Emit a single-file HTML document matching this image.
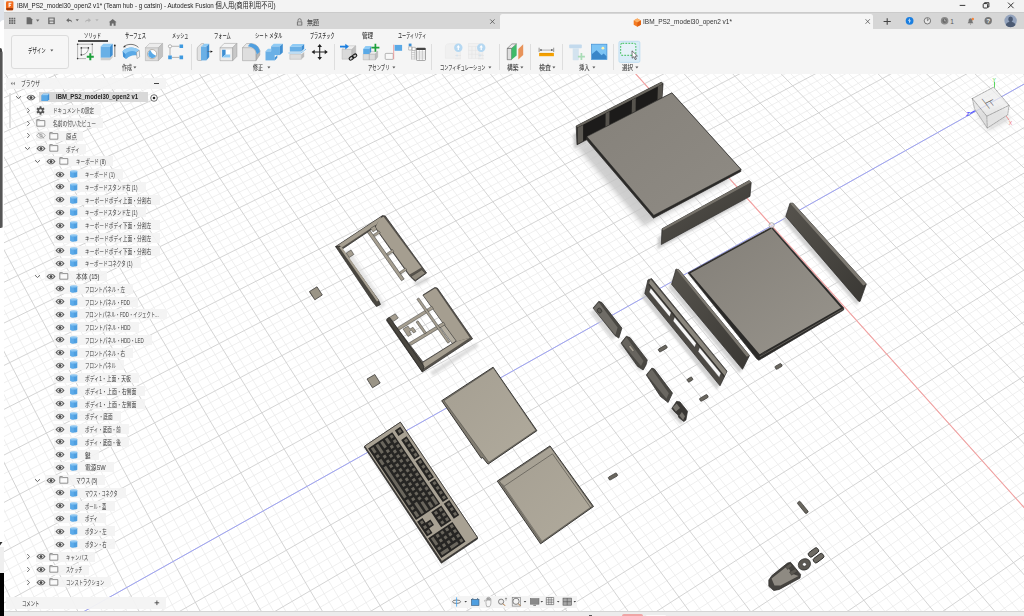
<!DOCTYPE html>
<html lang="ja"><head><meta charset="utf-8"><title>Autodesk Fusion</title>
<style>
*{box-sizing:border-box;margin:0;padding:0}
html,body{width:1024px;height:616px;overflow:hidden;background:#fff}
body{font-family:"Liberation Sans","Noto Sans CJK JP",sans-serif;color:#333;position:relative}
.abs{position:absolute}
.t{position:absolute;white-space:nowrap;line-height:1}

.tb{font-size:7px;color:#3c3c3c}
.tr{font-size:6.8px;color:#333}
.lb{position:absolute;background:rgba(240,240,240,.82);height:11px}

</style></head><body>
<svg class="abs" style="left:0;top:0" width="1024" height="616" viewBox="0 0 1024 616">
<rect x="0" y="74" width="1024" height="542" fill="#fff"/>
<path d="M-678.6 -112.6L606.8 -558.6M-677.4 -108.2L610.1 -556.1M-676.1 -103.8L613.3 -553.5M-674.9 -99.4L616.5 -551.0M-672.4 -90.5L623.1 -545.8M-671.1 -86.1L626.3 -543.3M-669.8 -81.6L629.6 -540.7M-668.5 -77.1L632.9 -538.1M-665.9 -68.0L639.6 -532.8M-664.6 -63.4L642.9 -530.2M-663.3 -58.8L646.3 -527.6M-662.0 -54.2L649.6 -524.9M-659.4 -44.8L656.4 -519.6M-658.0 -40.1L659.8 -516.9M-656.7 -35.4L663.2 -514.3M-655.4 -30.7L666.6 -511.6M-652.6 -21.2L673.5 -506.1M-651.3 -16.3L677.0 -503.4M-649.9 -11.5L680.5 -500.7M-648.5 -6.7L683.9 -497.9M-645.7 3.1L691.0 -492.4M-644.3 8.0L694.5 -489.6M-642.9 13.0L698.0 -486.9M-641.5 18.0L701.6 -484.1M-638.7 28.0L708.7 -478.4M-637.2 33.0L712.3 -475.6M-635.8 38.1L715.9 -472.8M-634.3 43.2L719.5 -469.9M-631.4 53.5L726.8 -464.2M-629.9 58.7L730.5 -461.3M-628.5 63.9L734.2 -458.4M-627.0 69.1L737.8 -455.5M-624.0 79.7L745.3 -449.7M-622.5 85.0L749.0 -446.8M-621.0 90.3L752.7 -443.8M-619.4 95.7L756.5 -440.8M-616.4 106.5L764.1 -434.9M-614.8 112.0L767.9 -431.9M-613.2 117.4L771.7 -428.9M-611.7 122.9L775.5 -425.9M-608.5 134.0L783.2 -419.8M-606.9 139.6L787.1 -416.8M-605.3 145.3L791.0 -413.7M-603.7 150.9L794.9 -410.6M-600.5 162.3L802.8 -404.4M-598.9 168.1L806.7 -401.3M-597.2 173.8L810.7 -398.2M-595.6 179.6L814.7 -395.1M-592.2 191.4L822.7 -388.8M-590.6 197.3L826.7 -385.6M-588.9 203.2L830.8 -382.4M-587.2 209.2L834.8 -379.2M-583.8 221.2L843.0 -372.8M-582.0 227.3L847.1 -369.5M-580.3 233.4L851.3 -366.3M-578.6 239.5L855.4 -363.0M-575.0 251.9L863.8 -356.5M-573.3 258.1L868.0 -353.2M-571.5 264.4L872.2 -349.9M-569.7 270.7L876.4 -346.5M-566.1 283.4L884.9 -339.8M-564.3 289.8L889.2 -336.5M-562.4 296.2L893.5 -333.1M-560.6 302.7L897.8 -329.7M-556.9 315.8L906.5 -322.8M-555.0 322.4L910.9 -319.4M-553.1 329.0L915.3 -315.9M-551.2 335.7L919.7 -312.5M-547.4 349.2L928.5 -305.5M-545.4 356.0L933.0 -302.0M-543.5 362.8L937.5 -298.5M-541.6 369.6L942.0 -294.9M-537.6 383.5L951.1 -287.8M-535.6 390.5L955.6 -284.2M-533.6 397.5L960.2 -280.6M-531.6 404.6L964.8 -277.0M-527.6 418.9L974.0 -269.7M-525.5 426.1L978.7 -266.0M-523.5 433.3L983.4 -262.4M-521.4 440.6L988.1 -258.7M-517.2 455.3L997.5 -251.2M-515.1 462.7L1002.3 -247.5M-513.0 470.2L1007.0 -243.7M-510.8 477.7L1011.8 -240.0M-506.5 492.9L1021.5 -232.4M-504.4 500.5L1026.4 -228.5M-502.2 508.2L1031.2 -224.7M-500.0 516.0L1036.1 -220.8M-495.5 531.6L1046.0 -213.1M-493.3 539.5L1051.0 -209.2M-491.0 547.4L1056.0 -205.2M-488.7 555.4L1061.0 -201.3M-484.2 571.5L1071.1 -193.4M-481.8 579.7L1076.2 -189.4M-479.5 587.9L1081.3 -185.4M-477.2 596.1L1086.4 -181.3M-472.4 612.8L1096.7 -173.2M-470.0 621.2L1101.9 -169.1M-467.6 629.6L1107.1 -165.0M-465.2 638.2L1112.3 -160.9M-460.3 655.4L1122.9 -152.6M-457.9 664.1L1128.2 -148.4M-455.4 672.8L1133.5 -144.2M-452.9 681.6L1138.9 -140.0M-447.8 699.4L1149.7 -131.5M-445.3 708.4L1155.1 -127.2M-442.7 717.4L1160.6 -122.9M-440.1 726.5L1166.1 -118.6M-434.9 744.9L1177.1 -109.9M-432.2 754.2L1182.7 -105.6M-429.6 763.5L1188.3 -101.2M-426.9 772.9L1193.9 -96.7M-421.5 791.9L1205.2 -87.8M-418.8 801.5L1210.9 -83.4M-416.0 811.2L1216.6 -78.9M-413.3 821.0L1222.4 -74.3M-407.7 840.6L1233.9 -65.2M-404.8 850.6L1239.8 -60.7M-402.0 860.6L1245.6 -56.0M-399.1 870.7L1251.5 -51.4M-393.3 891.1L1263.4 -42.1M-390.4 901.4L1269.3 -37.4M-387.4 911.8L1275.3 -32.7M-384.5 922.2L1281.4 -27.9M-378.5 943.4L1293.5 -18.4M-375.4 954.0L1299.6 -13.6M-372.4 964.8L1305.8 -8.7M-369.3 975.7L1311.9 -3.9M-363.1 997.6L1324.4 5.9M-359.9 1008.7L1330.7 10.9M-356.7 1019.8L1337.0 15.8M-353.5 1031.1L1343.3 20.8M-347.1 1053.8L1356.0 30.8M-343.8 1065.3L1362.5 35.9M-340.5 1076.9L1368.9 41.0M-337.2 1088.6L1375.4 46.1M-330.5 1112.2L1388.5 56.4M-327.1 1124.2L1395.1 61.6M-323.6 1136.2L1401.7 66.8M-320.2 1148.4L1408.4 72.0M-313.2 1172.9L1421.8 82.6M-309.7 1185.4L1428.6 87.9M-306.1 1197.9L1435.4 93.2M-302.5 1210.5L1442.2 98.6M-295.3 1236.0L1456.0 109.4M-291.6 1249.0L1462.9 114.9M-287.9 1262.0L1469.9 120.4M-284.2 1275.1L1476.9 125.9M-276.6 1301.7L1491.0 137.0M-272.8 1315.2L1498.1 142.6M-268.9 1328.8L1505.3 148.2M-265.0 1342.5L1512.5 153.9M-257.1 1370.2L1527.0 165.3M-253.2 1384.2L1534.3 171.1M-249.1 1398.3L1541.6 176.9M-245.1 1412.6L1549.0 182.7M-236.9 1441.5L1563.9 194.4M-232.7 1456.1L1571.5 200.3M-228.5 1470.9L1579.0 206.2M-224.3 1485.7L1586.6 212.2M-215.7 1515.9L1601.9 224.3M-211.4 1531.2L1609.6 230.3M-207.0 1546.6L1617.4 236.4M-202.6 1562.1L1625.2 242.6M-193.6 1593.6L1640.9 255.0M-189.1 1609.6L1648.9 261.2M-184.5 1625.7L1656.8 267.5M-179.9 1641.9L1664.9 273.8M-170.5 1674.9L1681.0 286.5M-165.8 1691.6L1689.2 292.9M-161.0 1708.4L1697.4 299.4M-156.2 1725.4L1705.7 305.9M-146.4 1759.9L1722.3 319.0M-141.4 1777.3L1730.7 325.6M-136.4 1795.0L1739.1 332.2M-131.3 1812.8L1747.6 338.9M-671.9 -119.7L-111.6 1819.2M-663.9 -122.5L-97.0 1807.7M-655.9 -125.2L-82.5 1796.3M-648.0 -128.0L-68.2 1785.0M-632.1 -133.5L-39.7 1762.5M-624.3 -136.2L-25.5 1751.3M-616.4 -138.9L-11.5 1740.3M-608.6 -141.6L2.5 1729.3M-593.0 -147.0L30.1 1707.4M-585.3 -149.7L43.8 1696.6M-577.5 -152.4L57.5 1685.9M-569.8 -155.0L71.0 1675.2M-554.5 -160.4L97.9 1654.0M-546.8 -163.0L111.2 1643.5M-539.2 -165.6L124.5 1633.0M-531.6 -168.3L137.6 1622.6M-516.5 -173.5L163.7 1602.0M-508.9 -176.1L176.7 1591.8M-501.4 -178.7L189.5 1581.7M-493.9 -181.3L202.3 1571.6M-479.0 -186.5L227.7 1551.6M-471.6 -189.0L240.3 1541.6M-464.2 -191.6L252.8 1531.8M-456.8 -194.2L265.2 1522.0M-442.1 -199.2L289.9 1502.5M-434.8 -201.8L302.1 1492.8M-427.5 -204.3L314.3 1483.2M-420.2 -206.8L326.4 1473.7M-405.7 -211.8L350.4 1454.8M-398.5 -214.3L362.3 1445.4M-391.3 -216.8L374.1 1436.0M-384.1 -219.3L385.9 1426.8M-369.8 -224.3L409.2 1408.3M-362.7 -226.7L420.8 1399.2M-355.6 -229.2L432.3 1390.1M-348.5 -231.6L443.8 1381.1M-334.4 -236.5L466.5 1363.1M-327.4 -238.9L477.8 1354.2M-320.4 -241.4L489.0 1345.4M-313.4 -243.8L500.2 1336.6M-299.5 -248.6L522.3 1319.1M-292.6 -251.0L533.3 1310.5M-285.7 -253.4L544.2 1301.8M-278.8 -255.7L555.1 1293.3M-265.1 -260.5L576.6 1276.3M-258.3 -262.9L587.3 1267.8M-251.5 -265.2L598.0 1259.4M-244.7 -267.6L608.5 1251.1M-231.1 -272.2L629.6 1234.5M-224.4 -274.6L640.0 1226.3M-217.7 -276.9L650.3 1218.1M-211.0 -279.2L660.7 1210.0M-197.7 -283.8L681.1 1193.8M-191.0 -286.1L691.3 1185.8M-184.4 -288.4L701.4 1177.8M-177.8 -290.7L711.5 1169.9M-164.6 -295.3L731.4 1154.1M-158.1 -297.5L741.4 1146.3M-151.5 -299.8L751.2 1138.5M-145.0 -302.0L761.0 1130.8M-132.0 -306.5L780.5 1115.4M-125.6 -308.8L790.2 1107.8M-119.1 -311.0L799.8 1100.2M-112.7 -313.2L809.4 1092.6M-99.9 -317.7L828.4 1077.6M-93.5 -319.9L837.8 1070.2M-87.1 -322.1L847.2 1062.8M-80.8 -324.3L856.5 1055.4M-68.1 -328.7L875.1 1040.8M-61.8 -330.8L884.3 1033.5M-55.6 -333.0L893.5 1026.3M-49.3 -335.2L902.6 1019.1M-36.8 -339.5L920.7 1004.8M-30.6 -341.6L929.7 997.7M-24.4 -343.8L938.6 990.7M-18.2 -345.9L947.5 983.6M-5.9 -350.2L965.2 969.7M0.2 -352.3L974.0 962.8M6.3 -354.4L982.7 955.9M12.4 -356.5L991.4 949.0M24.6 -360.7L1008.7 935.4M30.7 -362.8L1017.3 928.6M36.7 -364.9L1025.8 921.9M42.7 -367.0L1034.3 915.2M54.7 -371.2L1051.2 901.8M60.7 -373.2L1059.6 895.2M66.7 -375.3L1067.9 888.7M72.6 -377.4L1076.2 882.1M84.4 -381.5L1092.7 869.1M90.3 -383.5L1100.9 862.6M96.2 -385.5L1109.0 856.2M102.1 -387.6L1117.2 849.8M113.8 -391.6L1133.3 837.1M119.6 -393.6L1141.3 830.7M125.4 -395.6L1149.3 824.5M131.2 -397.6L1157.2 818.2M142.8 -401.6L1173.0 805.8M148.5 -403.6L1180.8 799.6M154.3 -405.6L1188.6 793.4M160.0 -407.6L1196.4 787.3M171.4 -411.5L1211.8 775.1M177.1 -413.5L1219.4 769.1M182.7 -415.5L1227.1 763.1M188.4 -417.4L1234.7 757.1M199.7 -421.3L1249.8 745.2M205.3 -423.3L1257.3 739.3M210.9 -425.2L1264.7 733.4M216.5 -427.1L1272.1 727.5M227.6 -431.0L1286.9 715.9M233.1 -432.9L1294.2 710.1M238.6 -434.8L1301.6 704.3M244.2 -436.7L1308.8 698.6M255.1 -440.5L1323.3 687.2M260.6 -442.4L1330.5 681.5M266.1 -444.3L1337.6 675.9M271.5 -446.2L1344.7 670.2M282.4 -450.0L1358.9 659.1M287.8 -451.8L1365.9 653.5M293.2 -453.7L1372.9 648.0M298.6 -455.6L1379.9 642.5M309.3 -459.3L1393.7 631.6M314.6 -461.1L1400.6 626.2M319.9 -463.0L1407.5 620.7M325.3 -464.8L1414.3 615.4M335.8 -468.5L1427.9 604.7M341.1 -470.3L1434.6 599.3M346.4 -472.1L1441.3 594.0M351.6 -473.9L1448.0 588.8M362.1 -477.5L1461.3 578.3M367.3 -479.3L1467.9 573.1M372.5 -481.1L1474.5 567.9M377.7 -482.9L1481.0 562.7M388.0 -486.5L1494.1 552.4M393.2 -488.3L1500.5 547.3M398.3 -490.1L1507.0 542.2M403.5 -491.9L1513.4 537.2M413.7 -495.4L1526.2 527.1M418.8 -497.2L1532.5 522.1M423.8 -498.9L1538.8 517.1M428.9 -500.7L1545.1 512.1M439.0 -504.2L1557.6 502.3M444.0 -505.9L1563.9 497.4M449.1 -507.6L1570.1 492.5M454.1 -509.4L1576.2 487.6M464.0 -512.8L1588.5 477.9M469.0 -514.5L1594.6 473.1M474.0 -516.3L1600.7 468.3M478.9 -518.0L1606.7 463.5M488.8 -521.4L1618.8 454.0M493.7 -523.1L1624.7 449.3M498.6 -524.8L1630.7 444.6M503.5 -526.5L1636.6 439.9M513.2 -529.8L1648.4 430.6M518.1 -531.5L1654.3 426.0M522.9 -533.2L1660.1 421.4M527.8 -534.9L1666.0 416.8M537.4 -538.2L1677.5 407.7M542.2 -539.9L1683.3 403.1M547.0 -541.5L1689.0 398.6M551.8 -543.2L1694.7 394.1M561.3 -546.5L1706.1 385.1M566.0 -548.1L1711.7 380.7M570.8 -549.8L1717.4 376.2M575.5 -551.4L1723.0 371.8M584.9 -554.7L1734.1 363.0M589.6 -556.3L1739.7 358.7M594.3 -557.9L1745.2 354.3M599.0 -559.5L1750.7 350.0" stroke="#ebebeb" stroke-width="0.8" fill="none"/>
<path d="M-679.9 -117.0L603.6 -561.1M-673.6 -95.0L619.8 -548.4M-667.2 -72.5L636.2 -535.5M-660.7 -49.5L653.0 -522.3M-654.0 -25.9L670.1 -508.9M-647.1 -1.8L687.4 -495.2M-640.1 23.0L705.1 -481.3M-632.9 48.3L723.2 -467.1M-625.5 74.4L741.5 -452.6M-617.9 101.1L760.3 -437.9M-610.1 128.5L779.4 -422.9M-602.1 156.6L798.8 -407.5M-593.9 185.5L818.7 -391.9M-585.5 215.2L838.9 -376.0M-576.8 245.7L859.6 -359.8M-567.9 277.0L880.6 -343.2M-558.7 309.2L902.2 -326.3M-549.3 342.4L924.1 -309.0M-539.6 376.6L946.5 -291.4M-529.6 411.7L969.4 -273.4M-519.3 447.9L992.8 -255.0M-508.7 485.3L1016.7 -236.2M-497.7 523.7L1041.1 -217.0M-486.5 563.4L1066.0 -197.3M-474.8 604.4L1091.5 -177.3M-462.8 646.7L1117.6 -156.8M-450.4 690.5L1144.3 -135.8M-437.5 735.6L1171.6 -114.3M-424.2 782.4L1199.5 -92.3M-410.5 830.8L1228.1 -69.8M-396.2 880.9L1257.4 -46.8M-381.5 932.8L1287.4 -23.2M-366.2 986.6L1318.1 1.0M-350.3 1042.4L1349.7 25.8M-333.8 1100.4L1381.9 51.2M-316.7 1160.6L1415.1 77.3M-298.9 1223.2L1449.0 104.0M-280.4 1288.4L1483.9 131.4M-261.1 1356.2L1519.7 159.6M-241.0 1427.0L1556.5 188.5M-220.0 1500.8L1594.2 218.2M-198.1 1577.8L1633.0 248.8M-175.2 1658.3L1672.9 280.1M-151.3 1742.6L1714.0 312.4M-126.2 1830.8L1756.2 345.6M-679.9 -117.0L-126.2 1830.8M-640.0 -130.7L-53.9 1773.7M-600.8 -144.3L16.3 1718.3M-562.1 -157.7L84.5 1664.5M-524.0 -170.9L150.7 1612.3M-486.5 -183.9L215.0 1561.5M-449.4 -196.7L277.6 1512.2M-412.9 -209.3L338.4 1464.2M-376.9 -221.8L397.6 1417.5M-341.4 -234.1L455.2 1372.1M-306.5 -246.2L511.3 1327.8M-271.9 -258.1L565.9 1284.7M-237.9 -269.9L619.1 1242.8M-204.3 -281.5L670.9 1201.9M-171.2 -293.0L721.5 1162.0M-138.5 -304.3L770.8 1123.1M-106.3 -315.5L818.9 1085.1M-74.5 -326.5L865.8 1048.1M-43.1 -337.3L911.6 1011.9M-12.1 -348.1L956.4 976.6M18.5 -358.6L1000.1 942.2M48.7 -369.1L1042.8 908.5M78.5 -379.4L1084.5 875.6M108.0 -389.6L1125.2 843.4M137.0 -399.6L1165.1 812.0M165.7 -409.6L1204.1 781.2M194.0 -419.4L1242.2 751.1M222.0 -429.1L1279.5 721.7M249.7 -438.6L1316.1 692.9M277.0 -448.1L1351.8 664.7M303.9 -457.4L1386.8 637.0M330.6 -466.6L1421.1 610.0M356.9 -475.7L1454.7 583.5M382.9 -484.7L1487.6 557.5M408.6 -493.6L1519.8 532.1M434.0 -502.4L1551.4 507.2M459.1 -511.1L1582.4 482.7M483.9 -519.7L1612.8 458.8M508.4 -528.2L1642.5 435.3M532.6 -536.5L1671.8 412.2M556.5 -544.8L1700.4 389.6M580.2 -553.0L1728.6 367.4M603.6 -561.1L1756.2 345.6" stroke="#cfcfcf" stroke-width="0.9" fill="none"/>
<path d="M194.0 -419.4L1242.2 751.1" stroke="#f5a0a0" stroke-width="1.1"/>
<path d="M-396.2 880.9L1257.4 -46.8" stroke="#9ea3f6" stroke-width="1"/>
<defs>
<linearGradient id="gTop" x1="0" y1="0" x2="1" y2="1"><stop offset="0" stop-color="#85817a"/><stop offset="1" stop-color="#8f8b84"/></linearGradient>
<linearGradient id="gTray" x1="0" y1="0" x2="1" y2="1"><stop offset="0" stop-color="#837f78"/><stop offset="1" stop-color="#98948c"/></linearGradient>
<linearGradient id="gSide" x1="0" y1="0" x2="1" y2="1"><stop offset="0" stop-color="#56534d"/><stop offset="1" stop-color="#3a3834"/></linearGradient>
<linearGradient id="gPl" x1="0" y1="0" x2="1" y2="1"><stop offset="0" stop-color="#a59f92"/><stop offset="1" stop-color="#b0aa9c"/></linearGradient>
<filter id="blur2" x="-20%" y="-20%" width="140%" height="140%"><feGaussianBlur stdDeviation="2.6"/></filter>
<filter id="blur1" x="-30%" y="-30%" width="160%" height="160%"><feGaussianBlur stdDeviation="1.2"/></filter>
</defs>
<path d="M576.9 147.6L661.9 103.9L730.8 180.3L643.8 226.3z" fill="#c2c2c2" filter="url(#blur2)" opacity="0.80"/>
<path d="M658.0 237.0L745.2 189.0L746.0 201.3L657.3 249.5z" fill="#c0c0c0" filter="url(#blur1)" opacity="0.80"/>
<path d="M573.2 134.0L587.0 128.0L587.0 144.0L574.0 148.8z" fill="#c0c0c0" filter="url(#blur1)" opacity="0.80"/>
<path d="M644.9 287.0L724.0 378.0L717.0 389.8L641.8 297.6z" fill="#c8c8c8" filter="url(#blur1)" opacity="0.80"/>
<path d="M673.0 277.0L746.5 363.0L739.5 373.3L668.6 288.3z" fill="#c8c8c8" filter="url(#blur1)" opacity="0.80"/>
<path d="M787.0 211.0L863.3 292.0L857.0 305.5L782.8 220.5z" fill="#c8c8c8" filter="url(#blur1)" opacity="0.80"/>
<path d="M576.2 126.0L661.2 82.2L663.1 83.5L662.0 97.5L587.0 139.5L577.0 144.8z" fill="#1c1b1a" stroke="#2b2a28" stroke-width="0.70" stroke-linejoin="round" />
<path d="M576.2 126.0L661.2 82.2L662.6 84.0L577.6 127.6z" fill="#6a675f" />
<path d="M577.6 127.8L583.1 125.0L583.1 141.0L577.6 144.0z" fill="#5d5a54" />
<path d="M605.6 113.4L609.5 111.5L609.3 126.5L605.5 128.6z" fill="#56534d" />
<path d="M632.0 99.9L635.8 97.9L635.6 112.0L631.7 114.1z" fill="#56534d" />
<path d="M657.9 86.6L662.6 84.2L662.2 97.3L657.5 99.9z" fill="#56534d" />
<path d="M586.9 136.6L671.9 92.9L740.8 169.3L740.8 171.4L653.4 218.2L586.4 139.6z" fill="#2b2a28" stroke="#2b2a28" stroke-width="0.70" stroke-linejoin="round" />
<path d="M586.9 136.6L671.9 92.9L740.8 169.3L653.8 215.3z" fill="url(#gTop)" stroke="#2b2a28" stroke-width="0.50" stroke-linejoin="round" />
<path d="M662.0 228.8L749.2 180.5L751.2 182.5L750.0 196.3L661.3 244.5z" fill="url(#gSide)" stroke="#2b2a28" stroke-width="0.70" stroke-linejoin="round" />
<path d="M662.0 228.8L749.2 180.5L751.0 182.3L663.0 230.5z" fill="#77736b" />
<path d="M790.0 203.2L793.0 203.2L866.3 284.0L860.0 301.5L858.6 301.2L785.8 216.5z" fill="url(#gSide)" stroke="#2b2a28" stroke-width="0.70" stroke-linejoin="round" />
<path d="M790.0 203.2L793.0 203.2L866.3 284.0L863.3 285.5z" fill="#7d7971" />
<path d="M688.0 273.0L771.8 227.0L843.8 308.0L843.6 310.0L758.8 360.3L756.5 358.5z" fill="#2b2a28" stroke="#2b2a28" stroke-width="0.70" stroke-linejoin="round" />
<path d="M690.3 273.3L771.6 228.6L841.0 307.8L759.6 354.2z" fill="url(#gTray)" />
<path d="M760.0 356.6L842.5 309.3" fill="none" stroke="#6d6a63" stroke-width="0.80" stroke-linecap="round" stroke-linejoin="round" />
<path d="M761.0 353.6L766.2 350.8L767.2 352.2L762.0 355.2z" fill="#3a3835" />
<circle cx="771.6" cy="225.3" r="2.6" fill="#eee" fill-opacity="0.6" stroke="#9a9a9a" stroke-width="0.7"/>
<path d="M676.0 269.0L679.1 269.9L749.5 355.5L742.5 369.3L671.6 284.3z" fill="url(#gSide)" stroke="#2b2a28" stroke-width="0.70" stroke-linejoin="round" />
<path d="M676.0 269.0L679.1 269.9L749.5 355.5L746.8 356.8z" fill="#7d7971" />
<path d="M647.9 279.9L651.6 278.6L727.0 371.2L720.0 385.8L644.8 293.6z" fill="#4d4a45" stroke="#2b2a28" stroke-width="0.70" stroke-linejoin="round" />
<path d="M650.6 279.2L726.4 371.6L724.8 375.9L649.0 283.5z" fill="#8a867d" />
<path d="M649.0 283.5L724.8 375.9L724.2 377.5L648.4 285.1z" fill="#35332f" />
<path d="M650.7 287.9L671.1 312.8L669.6 316.8L649.2 291.9z" fill="#f6f6f6" stroke="#2b2a28" stroke-width="0.35" stroke-linejoin="round" />
<path d="M674.6 317.0L696.2 343.3L694.7 347.3L673.1 321.0z" fill="#f6f6f6" stroke="#2b2a28" stroke-width="0.35" stroke-linejoin="round" />
<path d="M699.6 347.5L720.8 373.3L719.3 377.4L698.1 351.5z" fill="#f6f6f6" stroke="#2b2a28" stroke-width="0.35" stroke-linejoin="round" />
<path d="M590.0 312.0L612.0 340.0L617.0 336.0L596.0 309.0z" fill="#d0d0d0" filter="url(#blur1)" opacity="0.8"/>
<path d="M593.1 308.1L598.8 301.3L601.9 302.5L621.9 328.1L618.8 338.1L615.0 335.6z" fill="#4a4843" stroke="#2b2a28" stroke-width="0.70" stroke-linejoin="round" />
<path d="M593.6 308.6L598.8 302.3L617.6 327.5L615.4 335.0z" fill="#6f6c66" />
<ellipse cx="599.5" cy="310.6" rx="2.100" ry="2.600" fill="#5a5751" stroke="#2b2a28" stroke-width="0.600" transform="rotate(-35 599.5 310.6)"/>
<path d="M618.0 345.0L640.0 372.0L645.0 368.0L624.0 342.0z" fill="#d4d4d4" filter="url(#blur1)" opacity="0.8"/>
<path d="M626.3 336.3L630.0 337.5L647.3 360.0L646.0 365.0L643.1 370.0L637.5 366.3L621.0 343.1z" fill="#4a4843" stroke="#2b2a28" stroke-width="0.70" stroke-linejoin="round" />
<path d="M626.4 337.2L643.5 361.0L641.0 366.0L622.0 343.2z" fill="#67645e" />
<path d="M628.5 346.5L630.3 345.3L634.3 350.5L632.5 351.7z" fill="#a39d90" stroke="#2b2a28" stroke-width="0.30" stroke-linejoin="round" />
<path d="M651.9 368.1L654.4 369.0L672.5 393.1L668.1 402.5L660.5 396.5L646.3 375.0z" fill="#4a4843" stroke="#2b2a28" stroke-width="0.70" stroke-linejoin="round" />
<path d="M651.8 369.2L668.8 393.3L666.5 398.8L647.2 375.0z" fill="#6a6761" />
<path d="M673.6 404.3L684.5 414.3L682.9 423.0L680.8 424.6L668.9 411.4z" fill="#c8c8c8" filter="url(#blur1)" opacity="0.80"/>
<path d="M676.6 401.3L680.0 401.9L687.5 411.3L685.9 420.0L683.8 421.6L678.8 417.5L678.1 415.0L674.7 411.9L671.9 408.4z" fill="#3a3835" stroke="#2b2a28" stroke-width="0.70" stroke-linejoin="round" />
<path d="M672.8 407.5L676.6 403.4L680.0 408.1L675.9 411.6z" fill="#77746e" />
<path d="M679.4 415.6L681.9 411.9L685.0 416.3L683.1 420.0z" fill="#77746e" />
<rect x="658.2" y="346.8" width="9.1" height="3.4" rx="1" fill="#6a675f" stroke="#2b2a28" stroke-width="0.600" transform="rotate(-30 662.8 348.5)"/>
<rect x="687.2" y="377.9" width="5.5" height="3.4" rx="1" fill="#6a675f" stroke="#2b2a28" stroke-width="0.600" transform="rotate(-30 689.9 379.6)"/>
<rect x="699.4" y="396.2" width="8.9" height="3.4" rx="1" fill="#6a675f" stroke="#2b2a28" stroke-width="0.600" transform="rotate(-30 703.9 397.9)"/>
<rect x="775.0" y="364.7" width="7.1" height="3.4" rx="1" fill="#6a675f" stroke="#2b2a28" stroke-width="0.600" transform="rotate(-30 778.5 366.4)"/>
<rect x="608.2" y="474.8" width="9.5" height="3.4" rx="1" fill="#6a675f" stroke="#2b2a28" stroke-width="0.600" transform="rotate(-30 613.0 476.5)"/>
<rect x="-7" y="-1.7" width="14" height="3.4" rx="1" fill="#6a675f" stroke="#2b2a28" stroke-width="0.6" transform="translate(802.8 507.4) rotate(51)"/>
<path d="M343.0 252.0L380.0 309.0L386.0 305.0L349.0 249.0z" fill="#dcdcdc" filter="url(#blur1)" opacity="0.7"/>
<path d="M413.0 282.0L427.0 277.0L430.0 280.0L417.0 287.0z" fill="#cfcfcf" filter="url(#blur1)" opacity="0.7"/>
<path d="M382.5 215.6L385.3 216.0L426.6 273.0L415.0 281.3L410.0 276.3L408.8 274.8L374.7 227.0z" fill="#57534c" stroke="#2b2a28" stroke-width="0.70" stroke-linejoin="round" />
<path d="M378.6 219.0L383.6 216.8L421.4 267.6L416.5 270.5L409.6 274.4L375.2 226.8z" fill="#a59e90" />
<path d="M411.0 276.6L421.8 269.8L425.3 273.2L415.2 280.3z" fill="#8d877b" stroke="#2b2a28" stroke-width="0.40" stroke-linejoin="round" />
<path d="M335.6 246.6L382.2 215.8L378.6 219.5L375.2 226.9L343.2 248.5L339.5 250.5z" fill="#57534c" stroke="#2b2a28" stroke-width="0.70" stroke-linejoin="round" />
<path d="M336.6 246.3L381.6 216.5L376.5 224.5L342.5 246.9z" fill="#a59e90" />
<path d="M335.6 246.6L339.8 246.0L378.5 300.0L380.5 304.5L376.5 306.5L372.8 302.0z" fill="#4a4740" stroke="#2b2a28" stroke-width="0.70" stroke-linejoin="round" />
<path d="M339.2 247.2L341.2 246.2L378.8 300.2L377.0 301.5z" fill="#a59e90" />
<path d="M346.3 253.0L351.0 250.0L353.8 254.5L349.2 257.5z" fill="#a59e90" stroke="#2b2a28" stroke-width="0.50" stroke-linejoin="round" />
<path d="M367.3 232.2L370.0 230.4L404.2 279.0L401.5 280.8z" fill="#a59e90" stroke="#2b2a28" stroke-width="0.50" stroke-linejoin="round" />
<path d="M373.3 234.5L379.0 230.8L380.4 232.8L374.7 236.5z" fill="#a59e90" stroke="#2b2a28" stroke-width="0.40" stroke-linejoin="round" />
<path d="M386.5 253.5L392.5 249.5L393.9 251.5L387.9 255.5z" fill="#a59e90" stroke="#2b2a28" stroke-width="0.40" stroke-linejoin="round" />
<path d="M399.5 272.0L405.5 268.0L406.9 270.0L400.9 274.0z" fill="#a59e90" stroke="#2b2a28" stroke-width="0.40" stroke-linejoin="round" />
<path d="M370.5 228.5L374.5 225.8L377.0 229.2L373.0 232.0z" fill="#a59e90" stroke="#2b2a28" stroke-width="0.40" stroke-linejoin="round" />
<path d="M430.0 372.0L476.0 343.0L479.0 346.0L433.0 376.0z" fill="#d0d0d0" filter="url(#blur1)" opacity="0.7"/>
<path d="M422.9 295.0L434.8 287.5L437.3 288.0L472.6 338.8L422.3 372.0L386.5 320.5L389.0 317.5L422.9 361.9L456.0 341.3z" fill="#57534c" stroke="#2b2a28" stroke-width="0.70" stroke-linejoin="round" />
<path d="M423.5 295.5L434.8 288.4L436.2 288.8L469.8 337.8L456.5 341.5z" fill="#a59e90" />
<path d="M456.5 341.5L469.8 337.8L423.8 368.2L423.2 362.5z" fill="#a59e90" />
<path d="M439.2 325.8L443.2 323.3L456.2 341.0L452.2 343.5z" fill="#b5afa2" stroke="#2b2a28" stroke-width="0.50" stroke-linejoin="round" />
<path d="M386.6 319.2L389.6 317.3L424.0 366.5L422.3 371.8z" fill="#4a4740" stroke="#2b2a28" stroke-width="0.70" stroke-linejoin="round" />
<path d="M389.6 317.3L395.2 313.8L398.3 318.0L393.4 321.4z" fill="#a59e90" stroke="#2b2a28" stroke-width="0.50" stroke-linejoin="round" />
<path d="M397.6 327.4L431.8 306.2L433.4 308.8L399.2 330.0z" fill="#a59e90" stroke="#2b2a28" stroke-width="0.45" stroke-linejoin="round" />
<path d="M409.2 342.8L443.5 322.1L445.1 324.7L410.8 345.4z" fill="#a59e90" stroke="#2b2a28" stroke-width="0.45" stroke-linejoin="round" />
<path d="M416.8 299.2L418.8 297.9L449.8 341.9L447.8 343.2z" fill="#a59e90" stroke="#2b2a28" stroke-width="0.45" stroke-linejoin="round" />
<path d="M416.0 322.0L418.0 320.8L426.5 332.8L424.5 334.0z" fill="#a59e90" stroke="#2b2a28" stroke-width="0.45" stroke-linejoin="round" />
<path d="M403.0 329.0L408.0 326.0L410.0 329.0L413.0 327.3L416.0 331.5L413.5 333.0L411.5 330.3L409.5 331.5L411.5 334.5L408.0 336.5z" fill="#a59e90" stroke="#2b2a28" stroke-width="0.45" stroke-linejoin="round" />
<path d="M309.5 291.5L317.0 286.8L322.3 295.0L314.8 299.8z" fill="#9a9486" stroke="#2b2a28" stroke-width="0.70" stroke-linejoin="round" />
<path d="M309.5 291.5L314.8 299.8L315.8 301.0L309.8 293.0z" fill="#4a4740" />
<path d="M367.0 379.0L374.8 374.5L380.2 383.0L372.5 387.8z" fill="#9a9486" stroke="#2b2a28" stroke-width="0.70" stroke-linejoin="round" />
<path d="M493.1 367.2L536.9 430.7L488.0 464.2L482.5 457.5L481.3 458.3L441.7 400.7z" fill="#807b70" stroke="#2b2a28" stroke-width="0.90" stroke-linejoin="round" />
<path d="M493.3 368.0L535.8 430.3L488.9 462.2L444.0 400.7z" fill="url(#gPl)" stroke="#2b2a28" stroke-width="0.40" stroke-linejoin="round" />
<path d="M550.0 445.9L593.5 506.5L540.6 543.8L497.3 481.1z" fill="#807b70" stroke="#2b2a28" stroke-width="0.90" stroke-linejoin="round" />
<path d="M550.2 446.8L592.2 506.2L541.4 541.9L499.4 481.1z" fill="url(#gPl)" stroke="#2b2a28" stroke-width="0.40" stroke-linejoin="round" />
<path d="M504.1 486.2L552.5 453.8L590.5 507.5" fill="none" stroke="#3a3835" stroke-width="0.50" stroke-linecap="round" stroke-linejoin="round" />
<path d="M502.5 484.0L541.5 540.5" fill="none" stroke="#3a3835" stroke-width="0.40" stroke-linecap="round" stroke-linejoin="round" />
<path d="M368.0 449.0L443.0 566.0L448.0 562.0L372.0 446.0z" fill="#d0d0d0" filter="url(#blur1)" opacity="0.6"/>
<path d="M400.4 422.2L477.5 537.5L477.5 539.0L441.3 563.2L364.4 447.3L364.7 446.1z" fill="#3a3835" stroke="#2b2a28" stroke-width="0.70" stroke-linejoin="round" />
<path d="M400.4 422.2L477.5 537.5L441.8 561.4L364.7 446.1z" fill="#a8a193" stroke="#2b2a28" stroke-width="0.60" stroke-linejoin="round" />
<path d="M400.3 426.8L404.0 432.3L398.5 436.0L394.9 430.5zM406.6 436.3L419.8 456.0L414.3 459.6L401.2 439.9zM420.8 457.6L434.0 477.2L428.5 480.9L415.4 461.2zM435.1 478.8L448.2 498.5L442.8 502.1L429.6 482.5zM449.3 500.1L459.3 515.0L453.8 518.7L443.8 503.7zM392.3 432.2L440.2 503.8L416.0 520.1L368.1 448.4zM441.3 505.4L451.3 520.4L441.1 527.2L431.2 512.2zM430.4 519.6L434.0 525.1L428.6 528.7L424.9 523.2zM422.5 518.0L432.5 532.9L427.0 536.6L417.1 521.7zM452.4 522.0L465.5 541.6L441.3 557.9L428.1 538.2z" fill="#262523"/>
<path d="M400.1 429.0L401.9 431.7L399.4 433.4L397.6 430.7zM406.4 438.5L408.2 441.1L405.7 442.8L403.9 440.2zM409.6 443.2L411.4 445.8L408.8 447.5L407.1 444.9zM412.8 447.9L414.5 450.6L412.0 452.3L410.2 449.6zM415.9 452.6L417.7 455.3L415.2 457.0L413.4 454.3zM420.7 459.7L422.4 462.4L419.9 464.1L418.1 461.4zM423.8 464.5L425.6 467.1L423.1 468.8L421.3 466.2zM427.0 469.2L428.8 471.8L426.2 473.5L424.5 470.9zM430.1 473.9L431.9 476.6L429.4 478.3L427.6 475.6zM434.9 481.0L436.7 483.6L434.1 485.3L432.4 482.7zM438.0 485.7L439.8 488.4L437.3 490.1L435.5 487.4zM441.2 490.4L443.0 493.1L440.4 494.8L438.7 492.1zM444.4 495.2L446.1 497.8L443.6 499.5L441.8 496.9zM449.1 502.3L450.9 504.9L448.3 506.6L446.6 504.0zM452.3 507.0L454.0 509.6L451.5 511.3L449.7 508.7zM455.4 511.7L457.2 514.4L454.7 516.1L452.9 513.4zM392.1 434.4L393.9 437.0L391.4 438.7L389.6 436.1zM395.3 439.1L397.1 441.7L394.5 443.4L392.8 440.8zM398.5 443.8L400.2 446.5L397.7 448.2L395.9 445.5zM401.6 448.5L403.4 451.2L400.9 452.9L399.1 450.2zM404.8 453.3L406.6 455.9L404.0 457.6L402.2 455.0zM407.9 458.0L409.7 460.6L407.2 462.3L405.4 459.7zM411.1 462.7L412.9 465.4L410.3 467.1L408.6 464.4zM414.3 467.4L416.0 470.1L413.5 471.8L411.7 469.1zM417.4 472.2L419.2 474.8L416.7 476.5L414.9 473.9zM420.6 476.9L422.4 479.5L419.8 481.2L418.0 478.6zM423.7 481.6L425.5 484.3L423.0 486.0L421.2 483.3zM426.9 486.3L428.7 489.0L426.1 490.7L424.4 488.0zM430.1 491.1L431.8 493.7L429.3 495.4L427.5 492.8zM433.2 495.8L438.2 503.2L435.6 504.9L430.7 497.5zM387.4 437.5L390.8 442.5L388.3 444.2L384.9 439.2zM392.2 444.6L394.0 447.2L391.4 448.9L389.7 446.3zM395.3 449.3L397.1 452.0L394.6 453.7L392.8 451.0zM398.5 454.0L400.3 456.7L397.7 458.4L396.0 455.7zM401.7 458.8L403.4 461.4L400.9 463.1L399.1 460.5zM404.8 463.5L406.6 466.1L404.1 467.8L402.3 465.2zM408.0 468.2L409.8 470.9L407.2 472.6L405.4 469.9zM411.1 472.9L412.9 475.6L410.4 477.3L408.6 474.6zM414.3 477.7L416.1 480.3L413.5 482.0L411.8 479.4zM417.5 482.4L419.2 485.0L416.7 486.7L414.9 484.1zM420.6 487.1L422.4 489.8L419.9 491.5L418.1 488.8zM423.8 491.8L425.6 494.5L423.0 496.2L421.2 493.5zM426.9 496.6L428.7 499.2L426.2 500.9L424.4 498.3zM430.1 501.3L433.5 506.3L430.9 508.0L427.6 503.0zM382.7 440.7L386.9 446.8L384.4 448.5L380.2 442.4zM388.3 448.9L390.0 451.6L387.5 453.3L385.7 450.6zM391.4 453.6L393.2 456.3L390.7 458.0L388.9 455.3zM394.6 458.4L396.4 461.0L393.8 462.7L392.1 460.1zM397.8 463.1L399.5 465.7L397.0 467.4L395.2 464.8zM400.9 467.8L402.7 470.5L400.2 472.2L398.4 469.5zM404.1 472.5L405.8 475.2L403.3 476.9L401.5 474.2zM407.2 477.3L409.0 479.9L406.5 481.6L404.7 479.0zM410.4 482.0L412.2 484.6L409.6 486.3L407.9 483.7zM413.6 486.7L415.3 489.4L412.8 491.1L411.0 488.4zM416.7 491.5L418.5 494.1L416.0 495.8L414.2 493.1zM419.9 496.2L421.6 498.8L419.1 500.5L417.3 497.9zM423.0 500.9L428.8 509.5L426.2 511.2L420.5 502.6zM378.1 443.8L383.8 452.3L381.2 454.0L375.5 445.5zM385.2 454.4L386.9 457.1L384.4 458.8L382.6 456.1zM388.3 459.2L390.1 461.8L387.6 463.5L385.8 460.9zM391.5 463.9L393.3 466.5L390.7 468.2L388.9 465.6zM394.6 468.6L396.4 471.3L393.9 472.9L392.1 470.3zM397.8 473.3L399.6 476.0L397.0 477.7L395.3 475.0zM401.0 478.1L402.7 480.7L400.2 482.4L398.4 479.8zM404.1 482.8L405.9 485.4L403.4 487.1L401.6 484.5zM407.3 487.5L409.1 490.2L406.5 491.9L404.7 489.2zM410.4 492.2L412.2 494.9L409.7 496.6L407.9 493.9zM413.6 497.0L415.4 499.6L412.8 501.3L411.1 498.7zM416.8 501.7L424.1 512.6L421.5 514.3L414.2 503.4zM373.4 446.9L376.7 452.0L374.2 453.6L370.8 448.6zM378.1 454.0L379.9 456.7L377.3 458.4L375.6 455.7zM381.3 458.8L384.6 463.8L382.1 465.5L378.7 460.5zM386.0 465.8L406.7 496.8L404.2 498.5L383.5 467.5zM408.1 498.9L411.5 503.9L408.9 505.6L405.6 500.6zM412.9 506.0L414.6 508.7L412.1 510.4L410.3 507.7zM416.0 510.7L419.4 515.7L416.8 517.4L413.5 512.4zM441.1 507.6L442.9 510.3L440.4 512.0L438.6 509.3zM444.3 512.3L446.1 515.0L443.5 516.7L441.7 514.0zM447.4 517.1L449.2 519.7L446.7 521.4L444.9 518.8zM436.4 510.8L438.2 513.4L435.7 515.1L433.9 512.4zM439.6 515.5L441.4 518.1L438.8 519.8L437.0 517.2zM442.7 520.2L444.5 522.8L442.0 524.5L440.2 521.9zM430.2 521.8L432.0 524.4L429.4 526.1L427.7 523.5zM422.3 520.2L424.1 522.8L421.6 524.5L419.8 521.9zM425.5 524.9L427.3 527.6L424.7 529.3L423.0 526.6zM428.7 529.6L430.4 532.3L427.9 534.0L426.1 531.3zM452.2 524.1L454.0 526.8L451.4 528.5L449.6 525.8zM455.3 528.9L457.1 531.5L454.6 533.2L452.8 530.6zM458.5 533.6L460.3 536.2L457.7 537.9L456.0 535.3zM461.7 538.3L463.4 541.0L460.9 542.7L459.1 540.0zM447.5 527.3L449.3 529.9L446.7 531.6L444.9 529.0zM450.6 532.0L452.4 534.7L449.9 536.4L448.1 533.7zM453.8 536.7L455.6 539.4L453.0 541.1L451.3 538.4zM457.0 541.5L458.7 544.1L451.5 549.0L449.7 546.3zM442.8 530.4L444.6 533.1L442.0 534.8L440.2 532.1zM445.9 535.2L447.7 537.8L445.2 539.5L443.4 536.9zM449.1 539.9L450.9 542.5L448.3 544.2L446.6 541.6zM438.1 533.6L439.9 536.2L437.3 537.9L435.6 535.3zM441.2 538.3L443.0 541.0L440.5 542.6L438.7 540.0zM444.4 543.0L446.2 545.7L443.6 547.4L441.9 544.7zM447.6 547.8L449.3 550.4L442.1 555.2L440.3 552.6zM433.4 536.7L438.3 544.1L435.8 545.8L430.9 538.4zM439.7 546.2L441.5 548.8L438.9 550.5L437.2 547.9z" fill="#6a665d"/>
<path d="M768.8 580.0L771.9 575.6L787.5 563.1L790.6 562.3L800.6 574.4L800.0 578.1L779.4 589.4L773.8 590.6L768.8 586.3z" fill="#45433f" stroke="#2b2a28" stroke-width="0.70" stroke-linejoin="round" stroke-linejoin="round"/>
<path d="M771.5 578.5L787.5 566.0L791.5 573.5L798.5 576.0L780.5 585.5L774.5 585.5z" fill="#8e8a82" />
<path d="M785.5 566.5L790.2 563.2L792.3 566.0L787.5 569.5z" fill="#5a5751" stroke="#2b2a28" stroke-width="0.40" stroke-linejoin="round" />
<path d="M789.5 572.0L795.3 568.5L797.5 571.5L791.5 575.2z" fill="#5a5751" stroke="#2b2a28" stroke-width="0.40" stroke-linejoin="round" />
<ellipse cx="804.4" cy="564.4" rx="6.300" ry="5.500" fill="#5b5852" stroke="#2b2a28" stroke-width="0.700" transform="rotate(-30 804.4 564.4)"/><ellipse cx="804.4" cy="564.4" rx="2" ry="1.800" fill="#fff" stroke="#2b2a28" stroke-width="0.600"/>
<rect x="807.8" y="549.8" width="11.3" height="5.200" rx="2" fill="#6d6a63" stroke="#2b2a28" stroke-width="0.900" transform="rotate(-37 813.5 552.4)"/>
<rect x="812.8" y="555.6" width="11.5" height="5.200" rx="2" fill="#6d6a63" stroke="#2b2a28" stroke-width="0.900" transform="rotate(-37 818.5 558.2)"/>
<path d="M976.0 112.0L988.0 131.0L1010.0 120.0L1001.0 106.0z" fill="#c4c4c4" filter="url(#blur2)" opacity="0.6"/>
<path d="M972.3 98.5L986.8 116.2L987.3 128.0L974.5 108.9z" fill="#dedede" opacity="0.75"/>
<path d="M986.8 116.2L1009.1 105.3L1007.7 114.8L987.3 128.0z" fill="#e6e6e6" opacity="0.75"/>
<path d="M972.3 98.5L993.6 87.1L1009.1 105.3L986.8 116.2z" fill="#ececec" opacity="0.72"/>
<path d="M972.3 98.5L993.6 87.1L1009.1 105.3L986.8 116.2L972.3 98.5" fill="none" stroke="#666" stroke-width="0.50" stroke-linecap="round" stroke-linejoin="round" stroke-dasharray="2.500 1"/>
<path d="M972.3 98.5L974.5 108.9L987.3 128.0L1007.7 114.8L1009.1 105.3" fill="none" stroke="#777" stroke-width="0.50" stroke-linecap="round" stroke-linejoin="round" stroke-dasharray="2.500 1"/>
<path d="M986.8 116.2L987.3 128.0" fill="none" stroke="#777" stroke-width="0.50" stroke-linecap="round" stroke-linejoin="round" stroke-dasharray="2.500 1"/>
<path d="M994.5 82.3L994.5 87.2" fill="none" stroke="#3c3" stroke-width="0.80" stroke-linecap="round" stroke-linejoin="round" />
<path d="M970.5 113.2L974.5 111.0" fill="none" stroke="#55f" stroke-width="1.20" stroke-linecap="round" stroke-linejoin="round" />
<path d="M1006.5 116.5L1009.0 120.0" fill="none" stroke="#e77" stroke-width="0.80" stroke-linecap="round" stroke-linejoin="round" />
<text x="992.6" y="82" font-family="Liberation Sans,sans-serif" font-size="5" fill="#3c3">Y</text><text x="966.3" y="116.3" font-family="Liberation Sans,sans-serif" font-size="5.5" font-weight="bold" font-style="italic" fill="#55f">Z</text><text x="1008.8" y="125" font-family="Liberation Sans,sans-serif" font-size="5.2" fill="#e77">X</text><text x="0" y="0" font-family="Noto Sans CJK JP,sans-serif" font-size="10" font-weight="300" fill="#555" transform="matrix(0.854 1.106 -0.91 0.47 981.6 98.2)">上</text>
</svg>
<div class="abs" style="left:0;top:0;width:4px;height:616px;background:#fff"></div>
<div class="abs" style="left:0;top:0;width:4px;height:22px;background:#dfe3ea;border-bottom-left-radius:0"></div>
<div class="abs" style="left:0;top:20px;width:4px;height:6px;background:#fff;border-top-left-radius:4px"></div>
<div class="abs" style="left:0;top:51px;width:3px;height:177px;background:#555;border-radius:0 2px 2px 0;border-right:1px solid #999"></div>
<div class="abs" style="left:0;top:48px;width:2px;height:4px;background:#444;border-radius:0 2px 0 0"></div>
<div class="abs" style="left:0;top:547px;width:4px;height:26px;background:#efefef"></div>
<div class="abs" style="left:0;top:573px;width:3.5px;height:43px;background:#000"></div>
<svg class="abs" style="left:0;top:540px" width="4" height="8"><path d="M0 2h2.5L0 5.5z" fill="#333"/></svg>
<div class="abs" style="left:4px;top:0;width:1020px;height:12.5px;background:#f3f3f3"></div>
<svg class="abs" style="left:6px;top:1px" width="8" height="10" viewBox="0 0 8 10"><rect x="0" y="0.3" width="7.4" height="9" rx="1.3" fill="#f26a1b"/><rect x="0.4" y="7" width="6.6" height="2.2" rx="0.6" fill="#a33a08"/><path d="M2.6 1.8h2.8v1h-1.8v1h1.4v.9h-1.4v1.5h-1z" fill="#fff"/></svg>
<div class="t " style="left:17.0px;top:1.6px;font-size:8.0px;color:#1a1a1a;;transform:scaleX(0.7778);transform-origin:0 50%;">IBM_PS2_model30_open2 v1* (Team hub - g catsin) - Autodesk Fusion 個人用(商用利用不可)</div>
<svg class="abs" style="left:955px;top:0" width="69" height="12" viewBox="0 0 69 12"><g stroke="#222" stroke-width="0.9" fill="none"><path d="M4.7 5.4h5.6"/><rect x="28.2" y="3.6" width="4.4" height="4.4" rx="0.8"/><path d="M29.6 3.6v-.9h4.3v4.3h-1.2"/><path d="M53 2.6l5.6 5.6M58.6 2.6l-5.6 5.6"/></g></svg>
<div class="abs" style="left:4px;top:12.5px;width:1020px;height:16.1px;background:#d6d6d6"></div>
<div class="abs" style="left:4px;top:12.3px;width:1020px;height:1.2px;background:#cbcbcb"></div>
<div class="abs" style="left:500px;top:14px;width:373.2px;height:15px;background:#f5f5f5;border-top-left-radius:2.5px;border-top-right-radius:2.5px"></div>
<div class="abs" style="left:4px;top:28.6px;width:1020px;height:45.4px;background:#f5f5f5"></div>
<svg class="abs" style="left:4px;top:13px" width="130" height="16" viewBox="4 13 130 16">
<g fill="#6a6a6a">
<path d="M9 17.7h1.7v1.7H9zM11.3 17.7h1.7v1.7h-1.7zM13.6 17.7h1.7v1.7h-1.7zM9 20h1.7v1.7H9zM11.3 20h1.7v1.7h-1.7zM13.6 20h1.7v1.7h-1.7zM9 22.3h1.7v1.7H9zM11.3 22.3h1.7v1.7h-1.7zM13.6 22.3h1.7v1.7h-1.7z"/>
<path d="M26.6 17.3h3.6l2 2v5h-5.6z"/>
<path d="M36 19.6h3.4l-1.7 2.1z"/>
<path d="M48.2 17.5h6.6v6.6h-6.6z"/>
<path d="M66.2 20.3l2.6-2.2v1.4c2.2 0 3.3 1.2 3.4 3.2-.8-1.2-1.8-1.6-3.4-1.6v1.4z"/>
<path d="M75.6 19.2h3.3l-1.65 2z"/>
<path d="M108.8 22.2l3.9-3.2 3.9 3.2h-1v3.6h-2v-2.2h-1.8v2.2h-2v-3.6z"/>
</g>
<g fill="#b4b4b4">
<path d="M91 20.3l-2.6-2.2v1.4c-2.2 0-3.3 1.2-3.4 3.2.8-1.2 1.8-1.6 3.4-1.6v1.4z"/>
<path d="M95.3 19.2h3.3l-1.65 2z"/>
</g>
<path d="M49.4 18.6h4.2v1.8h-4.2zM49.6 21.6h3.8v1.6h-3.8z" fill="#d6d6d6"/>
</svg>
<svg class="abs" style="left:296px;top:18px" width="8" height="9" viewBox="0 0 8 9"><path d="M2 3.4v-1.1a1.6 1.6 0 013.2 0v1.1" stroke="#666" stroke-width="0.8" fill="none"/><rect x="0.9" y="3.4" width="5.4" height="4.2" rx="0.5" fill="#6a6a6a"/><rect x="1.8" y="4.2" width="3.6" height="2.6" fill="#c9c9c9"/></svg>
<div class="t " style="left:306.8px;top:20.2px;font-size:6.6px;color:#333;;transform:scaleX(0.9175);transform-origin:0 50%;">無題</div>
<svg class="abs" style="left:489px;top:18px" width="8" height="8" viewBox="0 0 8 8"><path d="M1.2 1.4l4.4 4.4M5.6 1.4l-4.4 4.4" stroke="#444" stroke-width="0.7"/></svg>
<svg class="abs" style="left:632.5px;top:17.5px" width="9" height="10" viewBox="0 0 9 10"><path d="M4.3 0.6l3.6 1.9v4.2l-3.6 2.1-3.6-2.1v-4.2z" fill="#f47a20"/><path d="M4.3 0.6l3.6 1.9-3.6 1.9-3.6-1.9z" fill="#fbb066"/><path d="M4.3 4.4l3.6-1.9v4.2l-3.6 2.1z" fill="#e0600f"/></svg>
<div class="t " style="left:643.0px;top:18.4px;font-size:7.6px;color:#333;;transform:scaleX(0.8569);transform-origin:0 50%;">IBM_PS2_model30_open2 v1*</div>
<svg class="abs" style="left:863.5px;top:18px" width="8" height="8" viewBox="0 0 8 8"><path d="M1.5 1.2l4.4 4.6M5.9 1.2l-4.4 4.6" stroke="#444" stroke-width="0.7"/></svg>
<svg class="abs" style="left:876px;top:13px" width="148" height="16" viewBox="876 13 148 16">
<path d="M883.6 21.5h7.2M887.2 18.2v6.6" stroke="#444" stroke-width="1.1"/>
<circle cx="909.6" cy="20.8" r="3.9" fill="#1b7fe0"/><path d="M909.9 18.1l-1.8 2.6h1.3l-.5 2.7 2-3h-1.4z" fill="#fff"/>
<circle cx="927.4" cy="20.8" r="3.2" fill="#e8e8e8" stroke="#6a6a6a" stroke-width="0.9"/><path d="M927.4 20.8l1.8-1.6M927.4 20.8v-2.6" stroke="#6a6a6a" stroke-width="0.8" fill="none"/>
<circle cx="944.6" cy="20.8" r="3.8" fill="#8a8a8a"/><circle cx="944.6" cy="20.8" r="2.2" fill="#6a6a6a"/><path d="M944.6 19.2v1.7h1.3" stroke="#ddd" stroke-width="0.6" fill="none"/>
<path d="M967.6 23.2c.8-.6 1-1.4 1-2.6 0-1.400 .8-2.400 1.900-2.400s1.900 1 1.900 2.400c0 1.200.2 2 1 2.600zM969.700 23.800h1.600l-.8 1z" fill="#777"/>
<circle cx="972.8" cy="19" r="1.2" fill="#f5833a"/>
<circle cx="988.2" cy="20.8" r="3.7" fill="#777"/>
<circle cx="1010.6" cy="20.8" r="6.200" fill="#93a3bd"/>
<path d="M1010.600 16.500a2.300 2.500 0 012.300 2.500c0 1.300-.7 2.300-1.300 2.700 1.700.4 3.400 1.300 3.900 3.200a6.200 6.200 0 01-9.800 0c.5-1.900 2.200-2.800 3.900-3.200-.6-.4-1.300-1.400-1.300-2.700a2.300 2.500 0 012.300-2.500z" fill="#4b5a73"/>
</svg>
<div class="t " style="left:950.3px;top:18.6px;font-size:6.5px;color:#555;;">1</div>
<div class="t " style="left:986.5px;top:17.5px;font-size:6.0px;color:#f2f2f2;font-weight:bold;">?</div>
<div class="abs" style="left:10.5px;top:34.5px;width:58px;height:34.5px;border:1px solid #dcdcdc;border-radius:3px;background:#f6f6f6"></div>
<div class="t " style="left:28.3px;top:48.4px;font-size:6.6px;color:#333;font-weight:500;transform:scaleX(0.6673);transform-origin:0 50%;">デザイン</div>
<svg class="abs" style="left:49.500px;top:49px" width="5" height="4"><path d="M0.3 0.600h3l-1.500 2z" fill="#555"/></svg>
<div class="t " style="left:84.0px;top:33.2px;font-size:6.5px;color:#333;font-weight:500;transform:scaleX(0.6538);transform-origin:0 50%;">ソリッド</div>
<div class="t " style="left:125.0px;top:33.2px;font-size:6.5px;color:#333;font-weight:500;transform:scaleX(0.6537);transform-origin:0 50%;">サーフェス</div>
<div class="t " style="left:172.0px;top:33.2px;font-size:6.5px;color:#333;font-weight:500;transform:scaleX(0.6346);transform-origin:0 50%;">メッシュ</div>
<div class="t " style="left:213.5px;top:33.2px;font-size:6.5px;color:#333;font-weight:500;transform:scaleX(0.6508);transform-origin:0 50%;">フォーム</div>
<div class="t " style="left:255.2px;top:33.2px;font-size:6.5px;color:#333;font-weight:500;transform:scaleX(0.6714);transform-origin:0 50%;">シート メタル</div>
<div class="t " style="left:309.8px;top:33.2px;font-size:6.5px;color:#333;font-weight:500;transform:scaleX(0.6302);transform-origin:0 50%;">プラスチック</div>
<div class="t " style="left:362.0px;top:33.2px;font-size:6.5px;color:#333;font-weight:500;transform:scaleX(0.8615);transform-origin:0 50%;">管理</div>
<div class="t " style="left:397.7px;top:33.2px;font-size:6.5px;color:#333;font-weight:500;transform:scaleX(0.6326);transform-origin:0 50%;">ユーティリティ</div>
<div class="abs" style="left:78px;top:40px;width:30px;height:1.5px;background:#4a4a4a"></div>
<div class="t " style="left:122.0px;top:65.1px;font-size:6.5px;color:#444;font-weight:500;transform:scaleX(0.7692);transform-origin:0 50%;">作成</div>
<svg class="abs" style="left:132.5px;top:65.8px" width="5" height="4"><path d="M0.4 0.6h3l-1.500 1.900z" fill="#555"/></svg>
<div class="t " style="left:253.3px;top:65.1px;font-size:6.5px;color:#444;font-weight:500;transform:scaleX(0.7692);transform-origin:0 50%;">修正</div>
<svg class="abs" style="left:267.0px;top:65.8px" width="5" height="4"><path d="M0.4 0.6h3l-1.500 1.900z" fill="#555"/></svg>
<div class="t " style="left:368.4px;top:65.1px;font-size:6.5px;color:#444;font-weight:500;transform:scaleX(0.6711);transform-origin:0 50%;">アセンブリ</div>
<svg class="abs" style="left:392.0px;top:65.8px" width="5" height="4"><path d="M0.4 0.6h3l-1.500 1.900z" fill="#555"/></svg>
<div class="t " style="left:439.5px;top:65.1px;font-size:6.5px;color:#444;font-weight:500;transform:scaleX(0.6416);transform-origin:0 50%;">コンフィギュレーション</div>
<svg class="abs" style="left:487.5px;top:65.8px" width="5" height="4"><path d="M0.4 0.6h3l-1.500 1.900z" fill="#555"/></svg>
<div class="t " style="left:507.4px;top:65.1px;font-size:6.5px;color:#444;font-weight:500;transform:scaleX(0.8923);transform-origin:0 50%;">構築</div>
<svg class="abs" style="left:520.4px;top:65.8px" width="5" height="4"><path d="M0.4 0.6h3l-1.500 1.900z" fill="#555"/></svg>
<div class="t " style="left:538.6px;top:65.1px;font-size:6.5px;color:#444;font-weight:500;transform:scaleX(0.9231);transform-origin:0 50%;">検査</div>
<svg class="abs" style="left:552.0px;top:65.8px" width="5" height="4"><path d="M0.4 0.6h3l-1.500 1.900z" fill="#555"/></svg>
<div class="t " style="left:579.3px;top:65.1px;font-size:6.5px;color:#444;font-weight:500;transform:scaleX(0.8231);transform-origin:0 50%;">挿入</div>
<svg class="abs" style="left:592.0px;top:65.8px" width="5" height="4"><path d="M0.4 0.6h3l-1.500 1.900z" fill="#555"/></svg>
<div class="t " style="left:622.0px;top:65.1px;font-size:6.5px;color:#444;font-weight:500;transform:scaleX(0.8462);transform-origin:0 50%;">選択</div>
<svg class="abs" style="left:634.5px;top:65.8px" width="5" height="4"><path d="M0.4 0.6h3l-1.500 1.900z" fill="#555"/></svg>
<div class="abs" style="left:190.6px;top:43.500px;width:1px;height:26px;background:#dedede"></div>
<div class="abs" style="left:333.8px;top:43.500px;width:1px;height:26px;background:#dedede"></div>
<div class="abs" style="left:430.8px;top:43.500px;width:1px;height:26px;background:#dedede"></div>
<div class="abs" style="left:499.1px;top:43.500px;width:1px;height:26px;background:#dedede"></div>
<div class="abs" style="left:530.3px;top:43.500px;width:1px;height:26px;background:#dedede"></div>
<div class="abs" style="left:561.7px;top:43.500px;width:1px;height:26px;background:#dedede"></div>
<div class="abs" style="left:613.4px;top:43.500px;width:1px;height:26px;background:#dedede"></div>
<svg class="abs" style="left:70px;top:40px" width="580" height="26" viewBox="70 40 580 26">
<defs>
<g id="hd"><path d="M0 0l2.600 -1.700v3.400z"/></g>
</defs>
<!-- 1 sketch -->
<g>
<path d="M77.600 44.200H92.300V54M77.600 44.200V58.600H86" fill="none" stroke="#9a9a9a" stroke-width="0.700"/>
<path d="M81.300 47.900H88.400C88.400 51.900 85.300 54.900 81.300 54.900z" fill="#fafafa" stroke="#777" stroke-width="0.700"/>
<g fill="#333"><circle cx="77.600" cy="44.200" r="0.800"/><circle cx="92.300" cy="44.200" r="0.800"/><circle cx="77.600" cy="58.600" r="0.800"/><circle cx="81.300" cy="47.900" r="0.800"/><circle cx="88.400" cy="47.900" r="0.800"/><circle cx="81.300" cy="54.900" r="0.800"/></g>
<path d="M90.300 53.200v7M86.800 56.700h7" stroke="#1ea03c" stroke-width="2"/>
</g>
<!-- 2 extrude -->
<g>
<path d="M100.700 57.600h9.300l2.700-2.600v2.400l-2.700 2.800h-9.300z" fill="#cfcfcf"/>
<path d="M100.700 46.400h9.300v11.200h-9.300z" fill="#6ab0e6"/>
<path d="M100.700 46.400l2.700-2.600h9.300l-2.700 2.600z" fill="#8fcbf5"/>
<path d="M110 46.400l2.700-2.600v11.200l-2.700 2.600z" fill="#3f8fd3"/>
<path d="M114.800 45.600v11.400" stroke="#8a8a8a" stroke-width="1.100"/><circle cx="114.800" cy="45.500" r="0.900" fill="#222"/>
</g>
<!-- 3 revolve -->
<g>
<path d="M138.400 47.400C134.500 43.400 127.500 43.600 123.600 46.700" fill="none" stroke="#444" stroke-width="0.700"/><path d="M123 47.300l2.200-1.800.3 1.700z" fill="#222"/>
<path d="M122.600 51.300c4-4.400 11.500-5 16.600-1l.500 6.500c-3.600-2.500-9.500-2.300-13.200 2.100z" fill="#5aa9e6"/>
<path d="M122.600 51.300c4-4.400 11.500-5 16.600-1l-2.700 2c-3.600-2.200-7.800-1.500-11.300 1.800z" fill="#8fcbf5"/>
<path d="M122.600 51.300l2.600 2.800.800 4.900-2.900-2.200z" fill="#3f8fd3"/>
<path d="M136.500 52.300l2.700-2 .5 6.500-2.700 1.800z" fill="#f0f0f0" stroke="#888" stroke-width="0.500"/>
</g>
<!-- 4 hole -->
<g stroke="#a8a8a8" stroke-width="0.500" stroke-linejoin="round">
<path d="M145.400 47.700h13v13h-13z" fill="#dcdcdc"/>
<path d="M145.400 47.700l4.200-4.300h13l-4.200 4.300z" fill="#ececec"/>
<path d="M158.400 47.700l4.200-4.300v13l-4.200 4.300z" fill="#c2c2c2"/>
</g>
<circle cx="152.100" cy="54.100" r="4.600" fill="#fff" stroke="#aaa39b" stroke-width="0.800"/>
<path d="M150.400 50.300c1.400 2.900 3 4.500 5.700 5.400a4.150 4.150 0 11-5.700-5.400z" fill="#5aa9e6"/>
<!-- 5 mesh -->
<g>
<path d="M171.800 46.300h7.700M170 48.100v7.500M171.800 57.400h7.700" stroke="#9a9a9a" stroke-width="0.700"/>
<circle cx="170" cy="46.300" r="1.600" fill="#fff" stroke="#888" stroke-width="0.600"/>
<path d="M179.500 44.500h3.600v3.600h-3.600zM168.200 55.600h3.600v3.600h-3.600zM179.500 55.600h3.600v3.600h-3.600z" fill="#3f9ae0"/>
</g>
<!-- 6 press pull -->
<g>
<path d="M197.200 49c0-1 .3-1.600 1-2.300l2.200-2.300c.7-.7 1.200-.9 2.200-.9h1v15l-2.600 2h-2.500c-.9 0-1.300-.4-1.300-1.300z" fill="#e2e2e2" stroke="#999" stroke-width="0.500"/>
<path d="M201 46.700h5.300v13.700h-5.300z" fill="#6ab0e6"/>
<path d="M201 46.700l3.200-2.900h5l-2.900 2.900z" fill="#8fcbf5"/>
<path d="M206.300 46.700l2.900-2.900v13.100l-2.900 3.500z" fill="#3f8fd3"/>
<path d="M207.700 51.600h3" stroke="#555" stroke-width="0.600"/><path d="M212.900 51.600l-2.400-1.200v2.400z" fill="#111"/>
</g>
<!-- 7 shell -->
<g stroke="#999" stroke-width="0.500" stroke-linejoin="round">
<path d="M220 47.700h12.700v13h-12.700z" fill="#ececec"/>
<path d="M220 47.700l4.200-4.300h12.700l-4.200 4.300z" fill="#f4f4f4"/>
<path d="M232.700 47.700l4.200-4.300v13l-4.200 4.300z" fill="#c8c8c8"/>
</g>
<path d="M222.100 49.800h8.100v7.800h-8.100z" fill="#fff"/>
<path d="M222.100 49.800h3.500v4.600l-3.500 3.200z" fill="#3f8fd3"/>
<path d="M225.600 54.400h4.600v3.200h-8.100z" fill="#8fcbf5"/>
<!-- 8 fillet -->
<g>
<path d="M255.900 53l3.900-3v5l-3.900 5.700z" fill="#b8b8b8" stroke="#999" stroke-width="0.500"/>
<path d="M242.500 47.700l4-4.200h4c5.500 0 9.300 3.800 9.300 8.500l-3.900 3z" fill="#e8e8e8" stroke="#999" stroke-width="0.500"/>
<path d="M250 43.500c5.700 0 9.800 3.800 9.800 8.500l-3.200 2.400c-.2-3.800-2.800-7.200-8.700-8.200z" fill="#4f9fe0"/>
<path d="M242.500 47.700h8c3 0 5.400 2.400 5.400 5.400v7.600h-13.400z" fill="#dedede" stroke="#999" stroke-width="0.500"/>
</g>
<!-- 9 combine -->
<g>
<path d="M271.100 46.300h8.800v8.800h-8.800z" fill="#6ab0e6"/>
<path d="M271.100 46.300l2.600-2.500h9.100l-2.900 2.500z" fill="#8fcbf5"/>
<path d="M279.900 46.300l2.900-2.500v8.800l-2.900 2.500z" fill="#3f8fd3"/>
<path d="M265.500 51.300h9.200v9.100h-9.200z" fill="#6ab0e6"/>
<path d="M265.500 51.300l2.500-2.500h3.100v2.500z" fill="#8fcbf5"/>
<path d="M274.700 55.100h2.600l-2.600 2.600z M274.700 55.100v5.300l2.600-2.600v-2.700z" fill="#3f8fd3"/>
</g>
<!-- 10 split -->
<g>
<path d="M289.800 54.400h11.600v4.900h-11.600z" fill="#dedede" stroke="#aaa" stroke-width="0.400"/>
<path d="M301.400 54.400l2.800-2.500v4.900l-2.800 2.500z" fill="#bcbcbc"/>
<path d="M288.400 53h12.600l5-3.900" fill="none" stroke="#7dc0f0" stroke-width="0.900"/>
<path d="M289.800 46.700h11.600v4.900h-11.600z" fill="#6ab0e6"/>
<path d="M289.800 46.700l2.800-2.800h11.600l-2.800 2.800z" fill="#8fcbf5"/>
<path d="M301.400 46.700l2.800-2.800v4.900l-2.800 2.800z" fill="#3f8fd3"/>
</g>
<!-- 11 move -->
<g fill="#222" stroke="#222">
<path d="M312.800 52h13.800M319.700 45.100v13.800" stroke-width="1.100" fill="none"/>
<path d="M319.700 43.900l2.300 3.100h-4.600zM319.700 60.100l2.300-3.100h-4.600zM311.600 52l3.100-2.300v4.600zM327.800 52l-3.100-2.300v4.600z" stroke="none"/>
</g>
<!-- 12 insert link -->
<g>
<g stroke="#aaa" stroke-width="0.400" stroke-linejoin="round">
<path d="M342.100 49.400h9.800v9.800h-9.800z" fill="#dadada"/>
<path d="M342.100 49.400l3.300-3.600h10.300l-3.800 3.600z" fill="#eeeeee"/>
<path d="M351.900 49.400l3.800-3.600v9.700l-3.800 3.700z" fill="#bfbfbf"/>
</g>
<path d="M340 46.600h6" stroke="#1b7fe0" stroke-width="1.800"/><path d="M348.900 46.600l-3.600-2.900v5.800z" fill="#1b7fe0"/>
<g fill="none" stroke="#1a1a1a" stroke-width="1.100"><rect x="-2.300" y="-1.500" width="4.600" height="3" rx="1.500" transform="translate(351.300 58.200) rotate(-35)"/><rect x="-2.300" y="-1.500" width="4.600" height="3" rx="1.500" transform="translate(354.600 55.900) rotate(-35)"/></g>
</g>
<!-- 13 new component -->
<g>
<g stroke="#aaa" stroke-width="0.400" stroke-linejoin="round">
<path d="M363.200 54h6.100v5.900h-6.100zM369.300 54h6.100v5.900h-6.100z" fill="#dcdcdc"/>
<path d="M369.300 54l2.300-2.600h6.100l-2.300 2.600z" fill="#eee"/>
<path d="M375.400 54l2.300-2.600v5.600l-2.300 2.900z" fill="#bdbdbd"/>
</g>
<path d="M363.200 48.900h6.100v5.100h-6.100z" fill="#5aa9e6"/>
<path d="M363.200 48.900l2.300-3h5.700l-1.900 3z" fill="#8fcbf5"/>
<path d="M369.300 48.900l1.900-3v5.500l-1.900 2.600z" fill="#3f8fd3"/>
<path d="M375.400 43.700v8M371.400 47.700h8" stroke="#1ea03c" stroke-width="1.700"/>
</g>
<!-- 14 joint -->
<g>
<rect x="385.200" y="53.400" width="8" height="6" rx="0.800" fill="#f8f8f8" stroke="#8a8a8a" stroke-width="0.600"/>
<path d="M393.700 44.700v14.700" stroke="#e98a8a" stroke-width="0.800"/>
<path d="M394.600 44.900h7.500v5.900h-7.500z" fill="#5aa9e6"/>
</g>
<!-- 15 table -->
<g>
<path d="M408.700 43.600h2.800v2.800h-2.800z" fill="#3f8fd3"/>
<path d="M408.700 46.800h3.200v3.200h-3.200zM411.900 47.300h3.400v3.200h-3.400z" fill="#fff" stroke="#888" stroke-width="0.500"/>
<path d="M411.500 50.500v9M414.800 50.500v9M411.500 52.500h3.300M411.500 54.700h3.300M411.500 56.900h3.300M411.500 59h3.300" stroke="#aaa" stroke-width="0.500" fill="none"/>
<rect x="416.400" y="48" width="9.100" height="12.400" rx="0.800" fill="#fdfdfd" stroke="#666" stroke-width="0.600"/>
<path d="M416.400 48h9.100v2h-9.100z" fill="#444"/>
<path d="M419.400 50v10.400M422.400 50v10.400M416.400 52h9.100M416.400 54h9.100M416.400 56h9.100M416.400 58h9.100" stroke="#999" stroke-width="0.400"/>
</g>
<!-- 16,17 config (faded) -->
<g>
<path d="M445.400 47c0-2 1.400-3.250 3.200-3.250h11.800v14.550h-15z" fill="#f0f0f0" stroke="#e6e6e6" stroke-width="0.500"/>
<circle cx="458.300" cy="47.700" r="4.200" fill="#b5d8f2"/><path d="M458.300 45l-1.800 2.400h1.200v2.600h1.200v-2.600h1.200z" fill="#fff"/>
<path d="M455 55.500h6M455 58.800h6" stroke="#e0e0e0" stroke-width="0.600"/><path d="M457 54.500v2" stroke="#c5def2" stroke-width="0.800"/>
<rect x="468.300" y="43.750" width="14.600" height="14.550" fill="#f1f1f1" stroke="#e4e4e4" stroke-width="0.500"/>
<path d="M468.300 46.500h14.600M471.900 46.500v11.800M475.500 46.500v11.800M479.100 46.500v11.800M468.300 50.400h14.600M468.300 54.300h14.600" stroke="#e3e3e3" stroke-width="0.500"/>
<circle cx="481.200" cy="47.700" r="4.200" fill="#b5d8f2"/><path d="M481.200 45l-1.800 2.400h1.200v2.600h1.200v-2.600h1.200z" fill="#fff"/>
<path d="M478 55.500h6M478 58.800h6" stroke="#e0e0e0" stroke-width="0.600"/><path d="M480 54.500v2" stroke="#c5def2" stroke-width="0.800"/>
</g>
<!-- 18 construct -->
<g>
<path d="M507.250 48.400l4.700-4.500h4.650l-5.100 4.500z" fill="#eee" stroke="#444" stroke-width="0.500" stroke-linejoin="round"/>
<path d="M507.250 48.400h4.250v11.300h-4.250z" fill="#dedede" stroke="#444" stroke-width="0.500" stroke-linejoin="round"/>
<path d="M511.500 48.400l5.100-4.500v11.600l-5.100 4.200z" fill="#3fba6a"/>
<path d="M518.300 48.900l4.900-4.700v10.800l-4.900 4.500z" fill="#e8935a"/>
</g>
<!-- 19 inspect -->
<g>
<path d="M539.100 47.700v4.300M553.700 47.700v4.300" stroke="#555" stroke-width="0.600"/>
<path d="M540.500 50.100h11.800" stroke="#666" stroke-width="0.500"/>
<path d="M539.500 50.100l2-1v2zM553.300 50.100l-2-1v2z" fill="#333"/>
<path d="M539.100 52.900h14.800v3.300h-14.800z" fill="#f5a100"/>
<path d="M541 53v1.200M543 53v1.200M545 53v1.200M547 53v1.200M549 53v1.200M551 53v1.200" stroke="#c47f00" stroke-width="0.500"/>
</g>
<!-- 20 insert (faded) -->
<g>
<rect x="569.200" y="44.400" width="12.600" height="3.800" rx="0.800" fill="#c3daed"/>
<path d="M572.700 48.200h6.100v11c0 .6-.4 1-1 1h-4.100c-.6 0-1-.4-1-1z" fill="#d3e3ef"/>
<path d="M581.400 53.100v7M577.900 56.600h7" stroke="#a9dcb6" stroke-width="1.700"/>
</g>
<!-- 21 picture -->
<g>
<rect x="591.600" y="44.200" width="15.300" height="15.300" fill="#7cc4f5" stroke="#3f8fd3" stroke-width="0.700"/>
<path d="M592 59.100v-5l4.600-3.800 4.900 4.900 2.200-1.600 2.800 2.700v2.800z" fill="#3a86c8"/>
<circle cx="602.900" cy="48.200" r="1.400" fill="#fff3b0"/>
</g>
<!-- 22 select -->
<g>
<rect x="618.900" y="41.300" width="21" height="21.100" rx="1.500" fill="#d9ecf7" stroke="#b5daf0" stroke-width="0.700"/>
<rect x="620.600" y="43.300" width="15.200" height="12" rx="1.800" fill="#e6f2f8" stroke="#5cc878" stroke-width="1.200" stroke-dasharray="1.800 1.200"/>
<path d="M632 50.800l.2 7.400 1.700-1.500 1.300 2.900 1.200-.5-1.300-2.900 2.300-.2z" fill="#fff" stroke="#222" stroke-width="0.600" stroke-linejoin="round"/>
</g>
</svg>

<div class="abs" style="left:6px;top:77.700px;width:159.600px;height:11.300px;background:rgba(243,243,243,.93)"></div>
<svg class="abs" style="left:9.500px;top:80.500px" width="6" height="5" viewBox="0 0 6 5"><path d="M2.400 0.800L0.800 2.500l1.600 1.700zM4.800 0.800L3.200 2.500l1.600 1.700z" fill="#777"/></svg>
<div class="t " style="left:21.0px;top:80.8px;font-size:6.8px;color:#333;;transform:scaleX(0.6989);transform-origin:0 50%;">ブラウザ</div>
<div class="abs" style="left:154.400px;top:82.500px;width:4.400px;height:0.900px;background:#444"></div>
<div class="abs" style="left:9.300px;top:93px;width:1.900px;height:35px;background:rgba(215,215,215,.75)"></div>
<svg class="abs" style="left:15.0px;top:95.1px" width="7" height="5" viewBox="0 0 7 5"><path d="M1 1.200l2.500 2.300 2.500-2.300" fill="none" stroke="#444" stroke-width="0.800"/></svg>
<svg class="abs" style="left:26.0px;top:94.1px" width="10" height="7" viewBox="0 0 10 7"><path d="M0.5 3.500C2 1.300 3.500 0.700 5 0.700s3 .6 4.500 2.800C8 5.700 6.500 6.300 5 6.300S2 5.700 0.500 3.500z" fill="#5a5a5a"/><ellipse cx="5" cy="3.500" rx="2.700" ry="1.900" fill="#f3f3f3"/><circle cx="5" cy="3.500" r="1.500" fill="#4a4a4a"/></svg>
<div class="abs" style="left:39px;top:92.4px;width:109px;height:10px;background:#d9d9d9"></div>
<svg class="abs" style="left:40.5px;top:92.9px" width="9" height="9" viewBox="0 0 9 9"><path d="M0.600 2.200l1.600-1.500h6v5.600l-1.500 1.700h-6.100z" fill="#3f8fd6"/><path d="M0.600 2.200h6.100v5.800h-6.100z" fill="#5aa9e6"/><path d="M0.600 2.200l1.600-1.500h6l-1.500 1.500z" fill="#9dd0f5"/></svg>
<div class="t " style="left:56.0px;top:93.3px;font-size:7.2px;color:#222;font-weight:bold;transform:scaleX(0.8296);transform-origin:0 50%;">IBM_PS2_model30_open2 v1</div>
<svg class="abs" style="left:149.500px;top:93.8px" width="8" height="8" viewBox="0 0 8 8"><circle cx="4" cy="4" r="3.300" fill="#fff" stroke="#333" stroke-width="0.700"/><circle cx="4" cy="4" r="1.300" fill="#222"/></svg>
<svg class="abs" style="left:25.8px;top:106.9px" width="5" height="7" viewBox="0 0 5 7"><path d="M1.200 1l2.300 2.500-2.300 2.500" fill="none" stroke="#555" stroke-width="0.800"/></svg>
<div class="abs" style="left:35.0px;top:105.4px;width:66.4px;height:10px;background:rgba(243,243,243,.9)"></div>
<svg class="abs" style="left:36.2px;top:105.9px" width="9" height="9" viewBox="-4.500 -4.500 9 9"><g fill="#555"><circle r="2.900"/><g id="gt"><rect x="-0.900" y="-4.200" width="1.800" height="8.400"/></g><use href="#gt" transform="rotate(60)"/><use href="#gt" transform="rotate(120)"/></g><circle r="1.300" fill="#f3f3f3"/></svg>
<div class="t " style="left:52.7px;top:108.3px;font-size:6.4px;color:#3a3a3a;;transform:scaleX(0.7163);transform-origin:0 50%;">ドキュメントの設定</div>
<svg class="abs" style="left:25.8px;top:119.6px" width="5" height="7" viewBox="0 0 5 7"><path d="M1.200 1l2.300 2.500-2.300 2.500" fill="none" stroke="#555" stroke-width="0.800"/></svg>
<div class="abs" style="left:35.0px;top:118.1px;width:68.2px;height:10px;background:rgba(243,243,243,.9)"></div>
<svg class="abs" style="left:35.6px;top:118.9px" width="10" height="8" viewBox="0 0 10 8"><path d="M0.800 0.600h2.600l.7 1h4.700v5.600h-8z" fill="#fafafa" stroke="#777" stroke-width="0.800"/><path d="M0.800 1.700h3.200" stroke="#777" stroke-width="0.600"/></svg>
<div class="t " style="left:52.7px;top:121.0px;font-size:6.4px;color:#3a3a3a;;transform:scaleX(0.7476);transform-origin:0 50%;">名前の付いたビュー</div>
<svg class="abs" style="left:25.8px;top:132.4px" width="5" height="7" viewBox="0 0 5 7"><path d="M1.200 1l2.300 2.500-2.300 2.500" fill="none" stroke="#555" stroke-width="0.800"/></svg>
<div class="abs" style="left:35.5px;top:130.9px;width:47.8px;height:10px;background:rgba(243,243,243,.9)"></div>
<svg class="abs" style="left:36.0px;top:132.4px" width="10" height="7" viewBox="0 0 10 7"><path d="M0.700 3.500C2 1.500 3.500 0.900 5 0.900s3 .6 4.300 2.600C8 5.500 6.500 6.100 5 6.100S2 5.500 0.700 3.500z" fill="none" stroke="#9a9a9a" stroke-width="0.700"/><circle cx="5" cy="3.500" r="1.300" fill="none" stroke="#9a9a9a" stroke-width="0.700"/><path d="M1.800 0.600l6.400 5.800" stroke="#8a8a8a" stroke-width="0.700"/></svg>
<svg class="abs" style="left:49.3px;top:131.7px" width="10" height="8" viewBox="0 0 10 8"><path d="M0.800 0.600h2.600l.7 1h4.700v5.600h-8z" fill="#fafafa" stroke="#777" stroke-width="0.800"/><path d="M0.800 1.700h3.200" stroke="#777" stroke-width="0.600"/></svg>
<div class="t " style="left:65.8px;top:133.8px;font-size:6.4px;color:#3a3a3a;;transform:scaleX(0.8606);transform-origin:0 50%;">原点</div>
<svg class="abs" style="left:24.0px;top:146.1px" width="7" height="5" viewBox="0 0 7 5"><path d="M1 1.200l2.500 2.300 2.500-2.300" fill="none" stroke="#444" stroke-width="0.800"/></svg>
<div class="abs" style="left:35.5px;top:143.6px;width:50.4px;height:10px;background:rgba(243,243,243,.9)"></div>
<svg class="abs" style="left:36.0px;top:145.1px" width="10" height="7" viewBox="0 0 10 7"><path d="M0.5 3.500C2 1.300 3.500 0.700 5 0.700s3 .6 4.500 2.800C8 5.700 6.500 6.300 5 6.300S2 5.700 0.500 3.500z" fill="#5a5a5a"/><ellipse cx="5" cy="3.500" rx="2.700" ry="1.900" fill="#f3f3f3"/><circle cx="5" cy="3.500" r="1.500" fill="#4a4a4a"/></svg>
<svg class="abs" style="left:49.3px;top:144.4px" width="10" height="8" viewBox="0 0 10 8"><path d="M0.800 0.600h2.600l.7 1h4.700v5.600h-8z" fill="#fafafa" stroke="#777" stroke-width="0.800"/><path d="M0.800 1.700h3.200" stroke="#777" stroke-width="0.600"/></svg>
<div class="t " style="left:65.8px;top:146.5px;font-size:6.4px;color:#3a3a3a;;transform:scaleX(0.7259);transform-origin:0 50%;">ボディ</div>
<svg class="abs" style="left:33.7px;top:158.9px" width="7" height="5" viewBox="0 0 7 5"><path d="M1 1.200l2.500 2.300 2.500-2.300" fill="none" stroke="#444" stroke-width="0.800"/></svg>
<div class="abs" style="left:45.0px;top:156.4px;width:68.2px;height:10px;background:rgba(243,243,243,.9)"></div>
<svg class="abs" style="left:45.5px;top:157.9px" width="10" height="7" viewBox="0 0 10 7"><path d="M0.5 3.500C2 1.300 3.500 0.700 5 0.700s3 .6 4.500 2.800C8 5.700 6.500 6.300 5 6.300S2 5.700 0.500 3.500z" fill="#5a5a5a"/><ellipse cx="5" cy="3.500" rx="2.700" ry="1.900" fill="#f3f3f3"/><circle cx="5" cy="3.500" r="1.500" fill="#4a4a4a"/></svg>
<svg class="abs" style="left:58.6px;top:157.2px" width="10" height="8" viewBox="0 0 10 8"><path d="M0.800 0.600h2.600l.7 1h4.700v5.600h-8z" fill="#fafafa" stroke="#777" stroke-width="0.800"/><path d="M0.800 1.700h3.200" stroke="#777" stroke-width="0.600"/></svg>
<div class="t " style="left:75.5px;top:159.3px;font-size:6.4px;color:#3a3a3a;;transform:scaleX(0.7149);transform-origin:0 50%;">キーボード (8)</div>
<div class="abs" style="left:54.4px;top:169.1px;width:68.7px;height:10px;background:rgba(243,243,243,.9)"></div>
<svg class="abs" style="left:55.0px;top:170.6px" width="10" height="7" viewBox="0 0 10 7"><path d="M0.5 3.500C2 1.300 3.500 0.700 5 0.700s3 .6 4.500 2.800C8 5.700 6.500 6.300 5 6.300S2 5.700 0.500 3.500z" fill="#5a5a5a"/><ellipse cx="5" cy="3.500" rx="2.700" ry="1.900" fill="#f3f3f3"/><circle cx="5" cy="3.500" r="1.500" fill="#4a4a4a"/></svg>
<svg class="abs" style="left:69.5px;top:170.1px" width="8" height="8" viewBox="0 0 8 8"><path d="M0.300 1.300v5.200c0 .6 1.500 1.100 3.500 1.100s3.500-.5 3.500-1.100V1.300z" fill="#4f9fe0"/><path d="M0.300 1.300v5.200c0 .6 1.500 1.100 3.500 1.100V2.400z" fill="#5cabea"/><ellipse cx="3.800" cy="1.400" rx="3.500" ry="1.100" fill="#8cc6f2"/></svg>
<div class="t " style="left:84.9px;top:172.0px;font-size:6.4px;color:#3a3a3a;;transform:scaleX(0.7149);transform-origin:0 50%;">キーボード (1)</div>
<div class="abs" style="left:54.4px;top:181.9px;width:91.4px;height:10px;background:rgba(243,243,243,.9)"></div>
<svg class="abs" style="left:55.0px;top:183.4px" width="10" height="7" viewBox="0 0 10 7"><path d="M0.5 3.500C2 1.300 3.500 0.700 5 0.700s3 .6 4.500 2.800C8 5.700 6.500 6.300 5 6.300S2 5.700 0.500 3.500z" fill="#5a5a5a"/><ellipse cx="5" cy="3.500" rx="2.700" ry="1.900" fill="#f3f3f3"/><circle cx="5" cy="3.500" r="1.500" fill="#4a4a4a"/></svg>
<svg class="abs" style="left:69.5px;top:182.9px" width="8" height="8" viewBox="0 0 8 8"><path d="M0.300 1.300v5.200c0 .6 1.500 1.100 3.500 1.100s3.500-.5 3.500-1.100V1.300z" fill="#4f9fe0"/><path d="M0.300 1.300v5.200c0 .6 1.500 1.100 3.500 1.100V2.400z" fill="#5cabea"/><ellipse cx="3.800" cy="1.400" rx="3.500" ry="1.100" fill="#8cc6f2"/></svg>
<div class="t " style="left:84.9px;top:184.8px;font-size:6.4px;color:#3a3a3a;;transform:scaleX(0.7129);transform-origin:0 50%;">キーボードスタンド右 (1)</div>
<div class="abs" style="left:54.4px;top:194.6px;width:105.2px;height:10px;background:rgba(243,243,243,.9)"></div>
<svg class="abs" style="left:55.0px;top:196.1px" width="10" height="7" viewBox="0 0 10 7"><path d="M0.5 3.500C2 1.300 3.500 0.700 5 0.700s3 .6 4.500 2.800C8 5.700 6.500 6.300 5 6.300S2 5.700 0.500 3.500z" fill="#5a5a5a"/><ellipse cx="5" cy="3.500" rx="2.700" ry="1.900" fill="#f3f3f3"/><circle cx="5" cy="3.500" r="1.500" fill="#4a4a4a"/></svg>
<svg class="abs" style="left:69.5px;top:195.6px" width="8" height="8" viewBox="0 0 8 8"><path d="M0.300 1.300v5.200c0 .6 1.500 1.100 3.500 1.100s3.500-.5 3.500-1.100V1.300z" fill="#4f9fe0"/><path d="M0.300 1.300v5.200c0 .6 1.500 1.100 3.500 1.100V2.400z" fill="#5cabea"/><ellipse cx="3.800" cy="1.400" rx="3.500" ry="1.100" fill="#8cc6f2"/></svg>
<div class="t " style="left:84.9px;top:197.5px;font-size:6.4px;color:#3a3a3a;;transform:scaleX(0.7436);transform-origin:0 50%;">キーボードボディ上面・分割右</div>
<div class="abs" style="left:54.4px;top:207.4px;width:91.4px;height:10px;background:rgba(243,243,243,.9)"></div>
<svg class="abs" style="left:55.0px;top:208.9px" width="10" height="7" viewBox="0 0 10 7"><path d="M0.5 3.500C2 1.300 3.500 0.700 5 0.700s3 .6 4.500 2.800C8 5.700 6.500 6.300 5 6.300S2 5.700 0.500 3.500z" fill="#5a5a5a"/><ellipse cx="5" cy="3.500" rx="2.700" ry="1.900" fill="#f3f3f3"/><circle cx="5" cy="3.500" r="1.500" fill="#4a4a4a"/></svg>
<svg class="abs" style="left:69.5px;top:208.4px" width="8" height="8" viewBox="0 0 8 8"><path d="M0.300 1.300v5.200c0 .6 1.500 1.100 3.500 1.100s3.500-.5 3.500-1.100V1.300z" fill="#4f9fe0"/><path d="M0.300 1.300v5.200c0 .6 1.500 1.100 3.500 1.100V2.400z" fill="#5cabea"/><ellipse cx="3.800" cy="1.400" rx="3.500" ry="1.100" fill="#8cc6f2"/></svg>
<div class="t " style="left:84.9px;top:210.3px;font-size:6.4px;color:#3a3a3a;;transform:scaleX(0.7129);transform-origin:0 50%;">キーボードスタンド左 (1)</div>
<div class="abs" style="left:54.4px;top:220.1px;width:105.2px;height:10px;background:rgba(243,243,243,.9)"></div>
<svg class="abs" style="left:55.0px;top:221.6px" width="10" height="7" viewBox="0 0 10 7"><path d="M0.5 3.500C2 1.300 3.500 0.700 5 0.700s3 .6 4.500 2.800C8 5.700 6.500 6.300 5 6.300S2 5.700 0.500 3.500z" fill="#5a5a5a"/><ellipse cx="5" cy="3.500" rx="2.700" ry="1.900" fill="#f3f3f3"/><circle cx="5" cy="3.500" r="1.500" fill="#4a4a4a"/></svg>
<svg class="abs" style="left:69.5px;top:221.1px" width="8" height="8" viewBox="0 0 8 8"><path d="M0.300 1.300v5.200c0 .6 1.500 1.100 3.500 1.100s3.500-.5 3.500-1.100V1.300z" fill="#4f9fe0"/><path d="M0.300 1.300v5.200c0 .6 1.500 1.100 3.500 1.100V2.400z" fill="#5cabea"/><ellipse cx="3.800" cy="1.400" rx="3.500" ry="1.100" fill="#8cc6f2"/></svg>
<div class="t " style="left:84.9px;top:223.0px;font-size:6.4px;color:#3a3a3a;;transform:scaleX(0.7436);transform-origin:0 50%;">キーボードボディ下面・分割左</div>
<div class="abs" style="left:54.4px;top:232.9px;width:105.2px;height:10px;background:rgba(243,243,243,.9)"></div>
<svg class="abs" style="left:55.0px;top:234.4px" width="10" height="7" viewBox="0 0 10 7"><path d="M0.5 3.500C2 1.300 3.500 0.700 5 0.700s3 .6 4.500 2.800C8 5.700 6.500 6.300 5 6.300S2 5.700 0.500 3.500z" fill="#5a5a5a"/><ellipse cx="5" cy="3.500" rx="2.700" ry="1.900" fill="#f3f3f3"/><circle cx="5" cy="3.500" r="1.500" fill="#4a4a4a"/></svg>
<svg class="abs" style="left:69.5px;top:233.9px" width="8" height="8" viewBox="0 0 8 8"><path d="M0.300 1.300v5.200c0 .6 1.500 1.100 3.500 1.100s3.500-.5 3.500-1.100V1.300z" fill="#4f9fe0"/><path d="M0.300 1.300v5.200c0 .6 1.500 1.100 3.500 1.100V2.400z" fill="#5cabea"/><ellipse cx="3.800" cy="1.400" rx="3.500" ry="1.100" fill="#8cc6f2"/></svg>
<div class="t " style="left:84.9px;top:235.8px;font-size:6.4px;color:#3a3a3a;;transform:scaleX(0.7436);transform-origin:0 50%;">キーボードボディ上面・分割左</div>
<div class="abs" style="left:54.4px;top:245.6px;width:105.2px;height:10px;background:rgba(243,243,243,.9)"></div>
<svg class="abs" style="left:55.0px;top:247.1px" width="10" height="7" viewBox="0 0 10 7"><path d="M0.5 3.500C2 1.300 3.500 0.700 5 0.700s3 .6 4.500 2.800C8 5.700 6.500 6.300 5 6.300S2 5.700 0.500 3.500z" fill="#5a5a5a"/><ellipse cx="5" cy="3.500" rx="2.700" ry="1.900" fill="#f3f3f3"/><circle cx="5" cy="3.500" r="1.500" fill="#4a4a4a"/></svg>
<svg class="abs" style="left:69.5px;top:246.6px" width="8" height="8" viewBox="0 0 8 8"><path d="M0.300 1.300v5.200c0 .6 1.500 1.100 3.500 1.100s3.500-.5 3.500-1.100V1.300z" fill="#4f9fe0"/><path d="M0.300 1.300v5.200c0 .6 1.500 1.100 3.500 1.100V2.400z" fill="#5cabea"/><ellipse cx="3.800" cy="1.400" rx="3.500" ry="1.100" fill="#8cc6f2"/></svg>
<div class="t " style="left:84.9px;top:248.5px;font-size:6.4px;color:#3a3a3a;;transform:scaleX(0.7436);transform-origin:0 50%;">キーボードボディ下面・分割右</div>
<div class="abs" style="left:54.4px;top:258.4px;width:86.5px;height:10px;background:rgba(243,243,243,.9)"></div>
<svg class="abs" style="left:55.0px;top:259.9px" width="10" height="7" viewBox="0 0 10 7"><path d="M0.5 3.500C2 1.300 3.500 0.700 5 0.700s3 .6 4.500 2.800C8 5.700 6.500 6.300 5 6.300S2 5.700 0.500 3.500z" fill="#5a5a5a"/><ellipse cx="5" cy="3.500" rx="2.700" ry="1.900" fill="#f3f3f3"/><circle cx="5" cy="3.500" r="1.500" fill="#4a4a4a"/></svg>
<svg class="abs" style="left:69.5px;top:259.4px" width="8" height="8" viewBox="0 0 8 8"><path d="M0.300 1.300v5.200c0 .6 1.500 1.100 3.500 1.100s3.500-.5 3.500-1.100V1.300z" fill="#4f9fe0"/><path d="M0.300 1.300v5.200c0 .6 1.500 1.100 3.500 1.100V2.400z" fill="#5cabea"/><ellipse cx="3.800" cy="1.400" rx="3.500" ry="1.100" fill="#8cc6f2"/></svg>
<div class="t " style="left:84.9px;top:261.3px;font-size:6.4px;color:#3a3a3a;;transform:scaleX(0.7104);transform-origin:0 50%;">キーボードコネクタ (1)</div>
<svg class="abs" style="left:33.7px;top:273.6px" width="7" height="5" viewBox="0 0 7 5"><path d="M1 1.200l2.500 2.300 2.500-2.300" fill="none" stroke="#444" stroke-width="0.800"/></svg>
<div class="abs" style="left:45.0px;top:271.1px;width:62.0px;height:10px;background:rgba(243,243,243,.9)"></div>
<svg class="abs" style="left:45.5px;top:272.6px" width="10" height="7" viewBox="0 0 10 7"><path d="M0.5 3.500C2 1.300 3.500 0.700 5 0.700s3 .6 4.500 2.800C8 5.700 6.500 6.300 5 6.300S2 5.700 0.500 3.500z" fill="#5a5a5a"/><ellipse cx="5" cy="3.500" rx="2.700" ry="1.900" fill="#f3f3f3"/><circle cx="5" cy="3.500" r="1.500" fill="#4a4a4a"/></svg>
<svg class="abs" style="left:58.6px;top:271.9px" width="10" height="8" viewBox="0 0 10 8"><path d="M0.800 0.600h2.600l.7 1h4.700v5.600h-8z" fill="#fafafa" stroke="#777" stroke-width="0.800"/><path d="M0.800 1.700h3.200" stroke="#777" stroke-width="0.600"/></svg>
<div class="t " style="left:75.5px;top:274.0px;font-size:6.4px;color:#3a3a3a;;transform:scaleX(0.9066);transform-origin:0 50%;">本体 (15)</div>
<div class="abs" style="left:54.4px;top:283.9px;width:79.0px;height:10px;background:rgba(243,243,243,.9)"></div>
<svg class="abs" style="left:55.0px;top:285.4px" width="10" height="7" viewBox="0 0 10 7"><path d="M0.5 3.500C2 1.300 3.500 0.700 5 0.700s3 .6 4.500 2.800C8 5.700 6.500 6.300 5 6.300S2 5.700 0.500 3.500z" fill="#5a5a5a"/><ellipse cx="5" cy="3.500" rx="2.700" ry="1.900" fill="#f3f3f3"/><circle cx="5" cy="3.500" r="1.500" fill="#4a4a4a"/></svg>
<svg class="abs" style="left:69.5px;top:284.9px" width="8" height="8" viewBox="0 0 8 8"><path d="M0.300 1.300v5.200c0 .6 1.500 1.100 3.500 1.100s3.500-.5 3.500-1.100V1.300z" fill="#4f9fe0"/><path d="M0.300 1.300v5.200c0 .6 1.500 1.100 3.500 1.100V2.400z" fill="#5cabea"/><ellipse cx="3.800" cy="1.400" rx="3.500" ry="1.100" fill="#8cc6f2"/></svg>
<div class="t " style="left:84.9px;top:286.8px;font-size:6.4px;color:#3a3a3a;;transform:scaleX(0.6955);transform-origin:0 50%;">フロントパネル・左</div>
<div class="abs" style="left:54.4px;top:296.6px;width:84.0px;height:10px;background:rgba(243,243,243,.9)"></div>
<svg class="abs" style="left:55.0px;top:298.1px" width="10" height="7" viewBox="0 0 10 7"><path d="M0.5 3.500C2 1.300 3.500 0.700 5 0.700s3 .6 4.500 2.800C8 5.700 6.500 6.300 5 6.300S2 5.700 0.500 3.500z" fill="#5a5a5a"/><ellipse cx="5" cy="3.500" rx="2.700" ry="1.900" fill="#f3f3f3"/><circle cx="5" cy="3.500" r="1.500" fill="#4a4a4a"/></svg>
<svg class="abs" style="left:69.5px;top:297.6px" width="8" height="8" viewBox="0 0 8 8"><path d="M0.300 1.300v5.200c0 .6 1.500 1.100 3.500 1.100s3.500-.5 3.500-1.100V1.300z" fill="#4f9fe0"/><path d="M0.300 1.300v5.200c0 .6 1.500 1.100 3.500 1.100V2.400z" fill="#5cabea"/><ellipse cx="3.800" cy="1.400" rx="3.500" ry="1.100" fill="#8cc6f2"/></svg>
<div class="t " style="left:84.9px;top:299.5px;font-size:6.4px;color:#3a3a3a;;transform:scaleX(0.7002);transform-origin:0 50%;">フロントパネル・FDD</div>
<div class="abs" style="left:54.4px;top:309.4px;width:112.8px;height:10px;background:rgba(243,243,243,.9)"></div>
<svg class="abs" style="left:55.0px;top:310.9px" width="10" height="7" viewBox="0 0 10 7"><path d="M0.5 3.500C2 1.300 3.500 0.700 5 0.700s3 .6 4.500 2.800C8 5.700 6.500 6.300 5 6.300S2 5.700 0.500 3.500z" fill="#5a5a5a"/><ellipse cx="5" cy="3.500" rx="2.700" ry="1.900" fill="#f3f3f3"/><circle cx="5" cy="3.500" r="1.500" fill="#4a4a4a"/></svg>
<svg class="abs" style="left:69.5px;top:310.4px" width="8" height="8" viewBox="0 0 8 8"><path d="M0.300 1.300v5.200c0 .6 1.500 1.100 3.500 1.100s3.500-.5 3.500-1.100V1.300z" fill="#4f9fe0"/><path d="M0.300 1.300v5.200c0 .6 1.500 1.100 3.500 1.100V2.400z" fill="#5cabea"/><ellipse cx="3.800" cy="1.400" rx="3.500" ry="1.100" fill="#8cc6f2"/></svg>
<div class="t " style="left:84.9px;top:312.3px;font-size:6.4px;color:#3a3a3a;;transform:scaleX(0.6837);transform-origin:0 50%;">フロントパネル・FDD・イジェクト...</div>
<div class="abs" style="left:54.4px;top:322.2px;width:84.6px;height:10px;background:rgba(243,243,243,.9)"></div>
<svg class="abs" style="left:55.0px;top:323.7px" width="10" height="7" viewBox="0 0 10 7"><path d="M0.5 3.500C2 1.300 3.500 0.700 5 0.700s3 .6 4.500 2.800C8 5.700 6.500 6.300 5 6.300S2 5.700 0.500 3.500z" fill="#5a5a5a"/><ellipse cx="5" cy="3.500" rx="2.700" ry="1.900" fill="#f3f3f3"/><circle cx="5" cy="3.500" r="1.500" fill="#4a4a4a"/></svg>
<svg class="abs" style="left:69.5px;top:323.2px" width="8" height="8" viewBox="0 0 8 8"><path d="M0.300 1.300v5.200c0 .6 1.500 1.100 3.500 1.100s3.500-.5 3.500-1.100V1.300z" fill="#4f9fe0"/><path d="M0.300 1.300v5.200c0 .6 1.500 1.100 3.500 1.100V2.400z" fill="#5cabea"/><ellipse cx="3.800" cy="1.400" rx="3.500" ry="1.100" fill="#8cc6f2"/></svg>
<div class="t " style="left:84.9px;top:325.1px;font-size:6.4px;color:#3a3a3a;;transform:scaleX(0.7017);transform-origin:0 50%;">フロントパネル・HDD</div>
<div class="abs" style="left:54.4px;top:334.9px;width:97.8px;height:10px;background:rgba(243,243,243,.9)"></div>
<svg class="abs" style="left:55.0px;top:336.4px" width="10" height="7" viewBox="0 0 10 7"><path d="M0.5 3.500C2 1.300 3.500 0.700 5 0.700s3 .6 4.500 2.800C8 5.700 6.500 6.300 5 6.300S2 5.700 0.500 3.500z" fill="#5a5a5a"/><ellipse cx="5" cy="3.500" rx="2.700" ry="1.900" fill="#f3f3f3"/><circle cx="5" cy="3.500" r="1.500" fill="#4a4a4a"/></svg>
<svg class="abs" style="left:69.5px;top:335.9px" width="8" height="8" viewBox="0 0 8 8"><path d="M0.300 1.300v5.200c0 .6 1.500 1.100 3.500 1.100s3.500-.5 3.500-1.100V1.300z" fill="#4f9fe0"/><path d="M0.300 1.300v5.200c0 .6 1.500 1.100 3.500 1.100V2.400z" fill="#5cabea"/><ellipse cx="3.800" cy="1.400" rx="3.500" ry="1.100" fill="#8cc6f2"/></svg>
<div class="t " style="left:84.9px;top:337.8px;font-size:6.4px;color:#3a3a3a;;transform:scaleX(0.7017);transform-origin:0 50%;">フロントパネル・HDD・LED</div>
<div class="abs" style="left:54.4px;top:347.7px;width:79.0px;height:10px;background:rgba(243,243,243,.9)"></div>
<svg class="abs" style="left:55.0px;top:349.2px" width="10" height="7" viewBox="0 0 10 7"><path d="M0.5 3.500C2 1.300 3.500 0.700 5 0.700s3 .6 4.500 2.800C8 5.700 6.500 6.300 5 6.300S2 5.700 0.500 3.500z" fill="#5a5a5a"/><ellipse cx="5" cy="3.500" rx="2.700" ry="1.900" fill="#f3f3f3"/><circle cx="5" cy="3.500" r="1.500" fill="#4a4a4a"/></svg>
<svg class="abs" style="left:69.5px;top:348.7px" width="8" height="8" viewBox="0 0 8 8"><path d="M0.300 1.300v5.200c0 .6 1.500 1.100 3.500 1.100s3.500-.5 3.500-1.100V1.300z" fill="#4f9fe0"/><path d="M0.300 1.300v5.200c0 .6 1.500 1.100 3.500 1.100V2.400z" fill="#5cabea"/><ellipse cx="3.800" cy="1.400" rx="3.500" ry="1.100" fill="#8cc6f2"/></svg>
<div class="t " style="left:84.9px;top:350.6px;font-size:6.4px;color:#3a3a3a;;transform:scaleX(0.6955);transform-origin:0 50%;">フロントパネル・右</div>
<div class="abs" style="left:54.4px;top:360.4px;width:69.9px;height:10px;background:rgba(243,243,243,.9)"></div>
<svg class="abs" style="left:55.0px;top:361.9px" width="10" height="7" viewBox="0 0 10 7"><path d="M0.5 3.500C2 1.300 3.500 0.700 5 0.700s3 .6 4.500 2.800C8 5.700 6.500 6.300 5 6.300S2 5.700 0.500 3.500z" fill="#5a5a5a"/><ellipse cx="5" cy="3.500" rx="2.700" ry="1.900" fill="#f3f3f3"/><circle cx="5" cy="3.500" r="1.500" fill="#4a4a4a"/></svg>
<svg class="abs" style="left:69.5px;top:361.4px" width="8" height="8" viewBox="0 0 8 8"><path d="M0.300 1.300v5.200c0 .6 1.500 1.100 3.500 1.100s3.500-.5 3.500-1.100V1.300z" fill="#4f9fe0"/><path d="M0.300 1.300v5.200c0 .6 1.500 1.100 3.500 1.100V2.400z" fill="#5cabea"/><ellipse cx="3.800" cy="1.400" rx="3.500" ry="1.100" fill="#8cc6f2"/></svg>
<div class="t " style="left:84.9px;top:363.3px;font-size:6.4px;color:#3a3a3a;;transform:scaleX(0.6907);transform-origin:0 50%;">フロントパネル</div>
<div class="abs" style="left:54.4px;top:373.2px;width:84.8px;height:10px;background:rgba(243,243,243,.9)"></div>
<svg class="abs" style="left:55.0px;top:374.7px" width="10" height="7" viewBox="0 0 10 7"><path d="M0.5 3.500C2 1.300 3.500 0.700 5 0.700s3 .6 4.500 2.800C8 5.700 6.500 6.300 5 6.300S2 5.700 0.500 3.500z" fill="#5a5a5a"/><ellipse cx="5" cy="3.500" rx="2.700" ry="1.900" fill="#f3f3f3"/><circle cx="5" cy="3.500" r="1.500" fill="#4a4a4a"/></svg>
<svg class="abs" style="left:69.5px;top:374.2px" width="8" height="8" viewBox="0 0 8 8"><path d="M0.300 1.300v5.200c0 .6 1.500 1.100 3.500 1.100s3.500-.5 3.500-1.100V1.300z" fill="#4f9fe0"/><path d="M0.300 1.300v5.200c0 .6 1.500 1.100 3.500 1.100V2.400z" fill="#5cabea"/><ellipse cx="3.800" cy="1.400" rx="3.500" ry="1.100" fill="#8cc6f2"/></svg>
<div class="t " style="left:84.9px;top:376.1px;font-size:6.4px;color:#3a3a3a;;transform:scaleX(0.7555);transform-origin:0 50%;">ボディ1・上面・天板</div>
<div class="abs" style="left:54.4px;top:385.9px;width:90.4px;height:10px;background:rgba(243,243,243,.9)"></div>
<svg class="abs" style="left:55.0px;top:387.4px" width="10" height="7" viewBox="0 0 10 7"><path d="M0.5 3.500C2 1.300 3.500 0.700 5 0.700s3 .6 4.500 2.800C8 5.700 6.500 6.300 5 6.300S2 5.700 0.500 3.500z" fill="#5a5a5a"/><ellipse cx="5" cy="3.500" rx="2.700" ry="1.900" fill="#f3f3f3"/><circle cx="5" cy="3.500" r="1.500" fill="#4a4a4a"/></svg>
<svg class="abs" style="left:69.5px;top:386.9px" width="8" height="8" viewBox="0 0 8 8"><path d="M0.300 1.300v5.200c0 .6 1.500 1.100 3.500 1.100s3.500-.5 3.500-1.100V1.300z" fill="#4f9fe0"/><path d="M0.300 1.300v5.200c0 .6 1.500 1.100 3.500 1.100V2.400z" fill="#5cabea"/><ellipse cx="3.800" cy="1.400" rx="3.500" ry="1.100" fill="#8cc6f2"/></svg>
<div class="t " style="left:84.9px;top:388.8px;font-size:6.4px;color:#3a3a3a;;transform:scaleX(0.7670);transform-origin:0 50%;">ボディ1・上面・右側面</div>
<div class="abs" style="left:54.4px;top:398.7px;width:90.4px;height:10px;background:rgba(243,243,243,.9)"></div>
<svg class="abs" style="left:55.0px;top:400.2px" width="10" height="7" viewBox="0 0 10 7"><path d="M0.5 3.500C2 1.300 3.500 0.700 5 0.700s3 .6 4.500 2.800C8 5.700 6.500 6.300 5 6.300S2 5.700 0.500 3.500z" fill="#5a5a5a"/><ellipse cx="5" cy="3.500" rx="2.700" ry="1.900" fill="#f3f3f3"/><circle cx="5" cy="3.500" r="1.500" fill="#4a4a4a"/></svg>
<svg class="abs" style="left:69.5px;top:399.7px" width="8" height="8" viewBox="0 0 8 8"><path d="M0.300 1.300v5.200c0 .6 1.500 1.100 3.500 1.100s3.500-.5 3.500-1.100V1.300z" fill="#4f9fe0"/><path d="M0.300 1.300v5.200c0 .6 1.500 1.100 3.500 1.100V2.400z" fill="#5cabea"/><ellipse cx="3.800" cy="1.400" rx="3.500" ry="1.100" fill="#8cc6f2"/></svg>
<div class="t " style="left:84.9px;top:401.6px;font-size:6.4px;color:#3a3a3a;;transform:scaleX(0.7670);transform-origin:0 50%;">ボディ1・上面・左側面</div>
<div class="abs" style="left:54.4px;top:411.4px;width:66.7px;height:10px;background:rgba(243,243,243,.9)"></div>
<svg class="abs" style="left:55.0px;top:412.9px" width="10" height="7" viewBox="0 0 10 7"><path d="M0.5 3.500C2 1.300 3.500 0.700 5 0.700s3 .6 4.500 2.800C8 5.700 6.500 6.300 5 6.300S2 5.700 0.500 3.500z" fill="#5a5a5a"/><ellipse cx="5" cy="3.500" rx="2.700" ry="1.900" fill="#f3f3f3"/><circle cx="5" cy="3.500" r="1.500" fill="#4a4a4a"/></svg>
<svg class="abs" style="left:69.5px;top:412.4px" width="8" height="8" viewBox="0 0 8 8"><path d="M0.300 1.300v5.200c0 .6 1.500 1.100 3.500 1.100s3.500-.5 3.500-1.100V1.300z" fill="#4f9fe0"/><path d="M0.300 1.300v5.200c0 .6 1.500 1.100 3.500 1.100V2.400z" fill="#5cabea"/><ellipse cx="3.800" cy="1.400" rx="3.500" ry="1.100" fill="#8cc6f2"/></svg>
<div class="t " style="left:84.9px;top:414.3px;font-size:6.4px;color:#3a3a3a;;transform:scaleX(0.7308);transform-origin:0 50%;">ボディ・底面</div>
<div class="abs" style="left:54.4px;top:424.2px;width:74.8px;height:10px;background:rgba(243,243,243,.9)"></div>
<svg class="abs" style="left:55.0px;top:425.7px" width="10" height="7" viewBox="0 0 10 7"><path d="M0.5 3.500C2 1.300 3.500 0.700 5 0.700s3 .6 4.500 2.800C8 5.700 6.500 6.300 5 6.300S2 5.700 0.500 3.500z" fill="#5a5a5a"/><ellipse cx="5" cy="3.500" rx="2.700" ry="1.900" fill="#f3f3f3"/><circle cx="5" cy="3.500" r="1.500" fill="#4a4a4a"/></svg>
<svg class="abs" style="left:69.5px;top:425.2px" width="8" height="8" viewBox="0 0 8 8"><path d="M0.300 1.300v5.200c0 .6 1.500 1.100 3.500 1.100s3.500-.5 3.500-1.100V1.300z" fill="#4f9fe0"/><path d="M0.300 1.300v5.200c0 .6 1.500 1.100 3.500 1.100V2.400z" fill="#5cabea"/><ellipse cx="3.800" cy="1.400" rx="3.500" ry="1.100" fill="#8cc6f2"/></svg>
<div class="t " style="left:84.9px;top:427.1px;font-size:6.4px;color:#3a3a3a;;transform:scaleX(0.7063);transform-origin:0 50%;">ボディ・底面・前</div>
<div class="abs" style="left:54.4px;top:436.9px;width:74.8px;height:10px;background:rgba(243,243,243,.9)"></div>
<svg class="abs" style="left:55.0px;top:438.4px" width="10" height="7" viewBox="0 0 10 7"><path d="M0.5 3.500C2 1.300 3.500 0.700 5 0.700s3 .6 4.500 2.800C8 5.700 6.500 6.300 5 6.300S2 5.700 0.500 3.500z" fill="#5a5a5a"/><ellipse cx="5" cy="3.500" rx="2.700" ry="1.900" fill="#f3f3f3"/><circle cx="5" cy="3.500" r="1.500" fill="#4a4a4a"/></svg>
<svg class="abs" style="left:69.5px;top:437.9px" width="8" height="8" viewBox="0 0 8 8"><path d="M0.300 1.300v5.200c0 .6 1.500 1.100 3.500 1.100s3.500-.5 3.500-1.100V1.300z" fill="#4f9fe0"/><path d="M0.300 1.300v5.200c0 .6 1.500 1.100 3.500 1.100V2.400z" fill="#5cabea"/><ellipse cx="3.800" cy="1.400" rx="3.500" ry="1.100" fill="#8cc6f2"/></svg>
<div class="t " style="left:84.9px;top:439.8px;font-size:6.4px;color:#3a3a3a;;transform:scaleX(0.7063);transform-origin:0 50%;">ボディ・底面・後</div>
<div class="abs" style="left:54.4px;top:449.7px;width:44.5px;height:10px;background:rgba(243,243,243,.9)"></div>
<svg class="abs" style="left:55.0px;top:451.2px" width="10" height="7" viewBox="0 0 10 7"><path d="M0.5 3.500C2 1.300 3.500 0.700 5 0.700s3 .6 4.500 2.800C8 5.700 6.500 6.300 5 6.300S2 5.700 0.500 3.500z" fill="#5a5a5a"/><ellipse cx="5" cy="3.500" rx="2.700" ry="1.900" fill="#f3f3f3"/><circle cx="5" cy="3.500" r="1.500" fill="#4a4a4a"/></svg>
<svg class="abs" style="left:69.5px;top:450.7px" width="8" height="8" viewBox="0 0 8 8"><path d="M0.300 1.300v5.200c0 .6 1.500 1.100 3.500 1.100s3.500-.5 3.500-1.100V1.300z" fill="#4f9fe0"/><path d="M0.300 1.300v5.200c0 .6 1.500 1.100 3.500 1.100V2.400z" fill="#5cabea"/><ellipse cx="3.800" cy="1.400" rx="3.500" ry="1.100" fill="#8cc6f2"/></svg>
<div class="t " style="left:84.9px;top:452.6px;font-size:6.4px;color:#3a3a3a;;transform:scaleX(0.8606);transform-origin:0 50%;">鍵</div>
<div class="abs" style="left:54.4px;top:462.4px;width:59.7px;height:10px;background:rgba(243,243,243,.9)"></div>
<svg class="abs" style="left:55.0px;top:463.9px" width="10" height="7" viewBox="0 0 10 7"><path d="M0.5 3.500C2 1.300 3.500 0.700 5 0.700s3 .6 4.500 2.800C8 5.700 6.500 6.300 5 6.300S2 5.700 0.500 3.500z" fill="#5a5a5a"/><ellipse cx="5" cy="3.500" rx="2.700" ry="1.900" fill="#f3f3f3"/><circle cx="5" cy="3.500" r="1.500" fill="#4a4a4a"/></svg>
<svg class="abs" style="left:69.5px;top:463.4px" width="8" height="8" viewBox="0 0 8 8"><path d="M0.300 1.300v5.200c0 .6 1.500 1.100 3.500 1.100s3.500-.5 3.500-1.100V1.300z" fill="#4f9fe0"/><path d="M0.300 1.300v5.200c0 .6 1.500 1.100 3.500 1.100V2.400z" fill="#5cabea"/><ellipse cx="3.800" cy="1.400" rx="3.500" ry="1.100" fill="#8cc6f2"/></svg>
<div class="t " style="left:84.9px;top:465.3px;font-size:6.4px;color:#3a3a3a;;transform:scaleX(0.8970);transform-origin:0 50%;">電源SW</div>
<svg class="abs" style="left:33.7px;top:477.7px" width="7" height="5" viewBox="0 0 7 5"><path d="M1 1.200l2.500 2.300 2.500-2.300" fill="none" stroke="#444" stroke-width="0.800"/></svg>
<div class="abs" style="left:45.0px;top:475.2px;width:59.9px;height:10px;background:rgba(243,243,243,.9)"></div>
<svg class="abs" style="left:45.5px;top:476.7px" width="10" height="7" viewBox="0 0 10 7"><path d="M0.5 3.500C2 1.300 3.500 0.700 5 0.700s3 .6 4.500 2.800C8 5.700 6.500 6.300 5 6.300S2 5.700 0.500 3.500z" fill="#5a5a5a"/><ellipse cx="5" cy="3.500" rx="2.700" ry="1.900" fill="#f3f3f3"/><circle cx="5" cy="3.500" r="1.500" fill="#4a4a4a"/></svg>
<svg class="abs" style="left:58.6px;top:476.0px" width="10" height="8" viewBox="0 0 10 8"><path d="M0.800 0.600h2.600l.7 1h4.700v5.600h-8z" fill="#fafafa" stroke="#777" stroke-width="0.800"/><path d="M0.800 1.700h3.200" stroke="#777" stroke-width="0.600"/></svg>
<div class="t " style="left:75.5px;top:478.1px;font-size:6.4px;color:#3a3a3a;;transform:scaleX(0.7439);transform-origin:0 50%;">マウス (5)</div>
<div class="abs" style="left:54.4px;top:487.9px;width:71.6px;height:10px;background:rgba(243,243,243,.9)"></div>
<svg class="abs" style="left:55.0px;top:489.4px" width="10" height="7" viewBox="0 0 10 7"><path d="M0.5 3.500C2 1.300 3.500 0.700 5 0.700s3 .6 4.500 2.800C8 5.700 6.500 6.300 5 6.300S2 5.700 0.500 3.500z" fill="#5a5a5a"/><ellipse cx="5" cy="3.500" rx="2.700" ry="1.900" fill="#f3f3f3"/><circle cx="5" cy="3.500" r="1.500" fill="#4a4a4a"/></svg>
<svg class="abs" style="left:69.5px;top:488.9px" width="8" height="8" viewBox="0 0 8 8"><path d="M0.300 1.300v5.200c0 .6 1.500 1.100 3.500 1.100s3.500-.5 3.500-1.100V1.300z" fill="#4f9fe0"/><path d="M0.300 1.300v5.200c0 .6 1.500 1.100 3.500 1.100V2.400z" fill="#5cabea"/><ellipse cx="3.800" cy="1.400" rx="3.500" ry="1.100" fill="#8cc6f2"/></svg>
<div class="t " style="left:84.9px;top:490.8px;font-size:6.4px;color:#3a3a3a;;transform:scaleX(0.6408);transform-origin:0 50%;">マウス・コネクタ</div>
<div class="abs" style="left:54.4px;top:500.7px;width:60.3px;height:10px;background:rgba(243,243,243,.9)"></div>
<svg class="abs" style="left:55.0px;top:502.2px" width="10" height="7" viewBox="0 0 10 7"><path d="M0.5 3.500C2 1.300 3.500 0.700 5 0.700s3 .6 4.500 2.800C8 5.700 6.500 6.300 5 6.300S2 5.700 0.500 3.500z" fill="#5a5a5a"/><ellipse cx="5" cy="3.500" rx="2.700" ry="1.900" fill="#f3f3f3"/><circle cx="5" cy="3.500" r="1.500" fill="#4a4a4a"/></svg>
<svg class="abs" style="left:69.5px;top:501.7px" width="8" height="8" viewBox="0 0 8 8"><path d="M0.300 1.300v5.200c0 .6 1.500 1.100 3.500 1.100s3.500-.5 3.500-1.100V1.300z" fill="#4f9fe0"/><path d="M0.300 1.300v5.200c0 .6 1.500 1.100 3.500 1.100V2.400z" fill="#5cabea"/><ellipse cx="3.800" cy="1.400" rx="3.500" ry="1.100" fill="#8cc6f2"/></svg>
<div class="t " style="left:84.9px;top:503.6px;font-size:6.4px;color:#3a3a3a;;transform:scaleX(0.6666);transform-origin:0 50%;">ボール・蓋</div>
<div class="abs" style="left:54.4px;top:513.4px;width:52.0px;height:10px;background:rgba(243,243,243,.9)"></div>
<svg class="abs" style="left:55.0px;top:514.9px" width="10" height="7" viewBox="0 0 10 7"><path d="M0.5 3.500C2 1.300 3.500 0.700 5 0.700s3 .6 4.500 2.800C8 5.700 6.500 6.300 5 6.300S2 5.700 0.500 3.500z" fill="#5a5a5a"/><ellipse cx="5" cy="3.500" rx="2.700" ry="1.900" fill="#f3f3f3"/><circle cx="5" cy="3.500" r="1.500" fill="#4a4a4a"/></svg>
<svg class="abs" style="left:69.5px;top:514.4px" width="8" height="8" viewBox="0 0 8 8"><path d="M0.300 1.300v5.200c0 .6 1.500 1.100 3.500 1.100s3.500-.5 3.500-1.100V1.300z" fill="#4f9fe0"/><path d="M0.300 1.300v5.200c0 .6 1.500 1.100 3.500 1.100V2.400z" fill="#5cabea"/><ellipse cx="3.800" cy="1.400" rx="3.500" ry="1.100" fill="#8cc6f2"/></svg>
<div class="t " style="left:84.9px;top:516.3px;font-size:6.4px;color:#3a3a3a;;transform:scaleX(0.6939);transform-origin:0 50%;">ボディ</div>
<div class="abs" style="left:54.4px;top:526.2px;width:60.7px;height:10px;background:rgba(243,243,243,.9)"></div>
<svg class="abs" style="left:55.0px;top:527.7px" width="10" height="7" viewBox="0 0 10 7"><path d="M0.5 3.500C2 1.300 3.500 0.700 5 0.700s3 .6 4.500 2.800C8 5.700 6.500 6.300 5 6.300S2 5.700 0.500 3.500z" fill="#5a5a5a"/><ellipse cx="5" cy="3.500" rx="2.700" ry="1.900" fill="#f3f3f3"/><circle cx="5" cy="3.500" r="1.500" fill="#4a4a4a"/></svg>
<svg class="abs" style="left:69.5px;top:527.2px" width="8" height="8" viewBox="0 0 8 8"><path d="M0.300 1.300v5.200c0 .6 1.500 1.100 3.500 1.100s3.500-.5 3.500-1.100V1.300z" fill="#4f9fe0"/><path d="M0.300 1.300v5.200c0 .6 1.500 1.100 3.500 1.100V2.400z" fill="#5cabea"/><ellipse cx="3.800" cy="1.400" rx="3.500" ry="1.100" fill="#8cc6f2"/></svg>
<div class="t " style="left:84.9px;top:529.1px;font-size:6.4px;color:#3a3a3a;;transform:scaleX(0.6791);transform-origin:0 50%;">ボタン・左</div>
<div class="abs" style="left:54.4px;top:539.0px;width:60.7px;height:10px;background:rgba(243,243,243,.9)"></div>
<svg class="abs" style="left:55.0px;top:540.5px" width="10" height="7" viewBox="0 0 10 7"><path d="M0.5 3.500C2 1.300 3.500 0.700 5 0.700s3 .6 4.500 2.800C8 5.700 6.500 6.300 5 6.300S2 5.700 0.500 3.500z" fill="#5a5a5a"/><ellipse cx="5" cy="3.500" rx="2.700" ry="1.900" fill="#f3f3f3"/><circle cx="5" cy="3.500" r="1.500" fill="#4a4a4a"/></svg>
<svg class="abs" style="left:69.5px;top:540.0px" width="8" height="8" viewBox="0 0 8 8"><path d="M0.300 1.300v5.200c0 .6 1.500 1.100 3.500 1.100s3.500-.5 3.500-1.100V1.300z" fill="#4f9fe0"/><path d="M0.300 1.300v5.200c0 .6 1.500 1.100 3.500 1.100V2.400z" fill="#5cabea"/><ellipse cx="3.800" cy="1.400" rx="3.500" ry="1.100" fill="#8cc6f2"/></svg>
<div class="t " style="left:84.9px;top:541.9px;font-size:6.4px;color:#3a3a3a;;transform:scaleX(0.6791);transform-origin:0 50%;">ボタン・右</div>
<svg class="abs" style="left:25.8px;top:553.2px" width="5" height="7" viewBox="0 0 5 7"><path d="M1.200 1l2.300 2.500-2.300 2.500" fill="none" stroke="#555" stroke-width="0.800"/></svg>
<div class="abs" style="left:35.5px;top:551.7px;width:59.0px;height:10px;background:rgba(243,243,243,.9)"></div>
<svg class="abs" style="left:36.0px;top:553.2px" width="10" height="7" viewBox="0 0 10 7"><path d="M0.5 3.500C2 1.300 3.500 0.700 5 0.700s3 .6 4.500 2.800C8 5.700 6.500 6.300 5 6.300S2 5.700 0.500 3.500z" fill="#5a5a5a"/><ellipse cx="5" cy="3.500" rx="2.700" ry="1.900" fill="#f3f3f3"/><circle cx="5" cy="3.500" r="1.500" fill="#4a4a4a"/></svg>
<svg class="abs" style="left:49.3px;top:552.5px" width="10" height="8" viewBox="0 0 10 8"><path d="M0.800 0.600h2.600l.7 1h4.700v5.600h-8z" fill="#fafafa" stroke="#777" stroke-width="0.800"/><path d="M0.800 1.700h3.200" stroke="#777" stroke-width="0.600"/></svg>
<div class="t " style="left:65.8px;top:554.6px;font-size:6.4px;color:#3a3a3a;;transform:scaleX(0.6948);transform-origin:0 50%;">キャンバス</div>
<svg class="abs" style="left:25.8px;top:566.0px" width="5" height="7" viewBox="0 0 5 7"><path d="M1.200 1l2.300 2.500-2.300 2.500" fill="none" stroke="#555" stroke-width="0.800"/></svg>
<div class="abs" style="left:35.5px;top:564.5px;width:53.2px;height:10px;background:rgba(243,243,243,.9)"></div>
<svg class="abs" style="left:36.0px;top:566.0px" width="10" height="7" viewBox="0 0 10 7"><path d="M0.5 3.500C2 1.300 3.500 0.700 5 0.700s3 .6 4.500 2.800C8 5.700 6.500 6.300 5 6.300S2 5.700 0.500 3.500z" fill="#5a5a5a"/><ellipse cx="5" cy="3.500" rx="2.700" ry="1.900" fill="#f3f3f3"/><circle cx="5" cy="3.500" r="1.500" fill="#4a4a4a"/></svg>
<svg class="abs" style="left:49.3px;top:565.3px" width="10" height="8" viewBox="0 0 10 8"><path d="M0.800 0.600h2.600l.7 1h4.700v5.600h-8z" fill="#fafafa" stroke="#777" stroke-width="0.800"/><path d="M0.800 1.700h3.200" stroke="#777" stroke-width="0.600"/></svg>
<div class="t " style="left:65.8px;top:567.4px;font-size:6.4px;color:#3a3a3a;;transform:scaleX(0.6416);transform-origin:0 50%;">スケッチ</div>
<svg class="abs" style="left:25.8px;top:578.7px" width="5" height="7" viewBox="0 0 5 7"><path d="M1.200 1l2.300 2.500-2.300 2.500" fill="none" stroke="#555" stroke-width="0.800"/></svg>
<div class="abs" style="left:35.5px;top:577.2px;width:75.0px;height:10px;background:rgba(243,243,243,.9)"></div>
<svg class="abs" style="left:36.0px;top:578.7px" width="10" height="7" viewBox="0 0 10 7"><path d="M0.5 3.500C2 1.300 3.500 0.700 5 0.700s3 .6 4.500 2.800C8 5.700 6.500 6.300 5 6.300S2 5.700 0.500 3.500z" fill="#5a5a5a"/><ellipse cx="5" cy="3.500" rx="2.700" ry="1.900" fill="#f3f3f3"/><circle cx="5" cy="3.500" r="1.500" fill="#4a4a4a"/></svg>
<svg class="abs" style="left:49.3px;top:578.0px" width="10" height="8" viewBox="0 0 10 8"><path d="M0.800 0.600h2.600l.7 1h4.700v5.600h-8z" fill="#fafafa" stroke="#777" stroke-width="0.800"/><path d="M0.800 1.700h3.200" stroke="#777" stroke-width="0.600"/></svg>
<div class="t " style="left:65.8px;top:580.1px;font-size:6.4px;color:#3a3a3a;;transform:scaleX(0.6656);transform-origin:0 50%;">コンストラクション</div>
<div class="abs" style="left:6px;top:596.600px;width:159.600px;height:12.600px;background:rgba(243,243,243,.95)"></div>
<div class="t " style="left:21.5px;top:600.9px;font-size:6.8px;color:#333;;transform:scaleX(0.6363);transform-origin:0 50%;">コメント</div>
<svg class="abs" style="left:154px;top:600px" width="6" height="6" viewBox="0 0 6 6"><path d="M0.600 2.800h4.600M2.900 0.500v4.600" stroke="#444" stroke-width="0.900"/></svg>
<div class="abs" style="left:450.700px;top:596px;width:126.800px;height:12px;background:rgba(243,243,243,.92)"></div>
<svg class="abs" style="left:450px;top:595px" width="130" height="14" viewBox="450 595 130 14">
<ellipse cx="456.600" cy="601.700" rx="4" ry="1.700" fill="none" stroke="#444" stroke-width="0.700"/><path d="M456.600 597.300v9.300" stroke="#3aa0f0" stroke-width="0.800"/>
<g fill="#444"><path d="M464.400 600.900h2.600l-1.300 1.700zM523.700 600.900h2.600l-1.300 1.700zM540.500 600.900h2.600l-1.300 1.700zM556.900 600.900h2.600l-1.300 1.700zM573.500 600.900h2.600l-1.300 1.700z"/></g>
<rect x="471.400" y="599.300" width="7.600" height="6.200" fill="#4f9fe0" stroke="#3a5a7a" stroke-width="0.600"/><path d="M472.800 599.300v-1.200M477.600 599.300v-1.200" stroke="#3a5a7a" stroke-width="0.800"/>
<path d="M486 602.600l-1.300-1.500c-.5-.6.300-1.300.9-.8l1.100.9v-2.800c0-.8 1-.8 1 0v2.000-2.700c0-.8 1.100-.8 1.100 0v2.700-2.300c0-.8 1.100-.8 1.100 0v2.400-1.500c0-.7 1-.7 1 0v3.400c0 2.200-.6 3.400-1.500 4.300h-2.600c-.6-1.300-.8-2.600-.8-4.100z" fill="#f7f7f7" stroke="#777" stroke-width="0.500" stroke-linejoin="round"/>
<circle cx="501.100" cy="601.700" r="2.600" fill="#eee" stroke="#555" stroke-width="0.700"/><path d="M503 603.700l2.100 2.100" stroke="#b07030" stroke-width="1"/><path d="M506 598v2.500M505 599l1-1.200 1 1.200" stroke="#555" stroke-width="0.500" fill="none"/>
<rect x="512.200" y="597.500" width="8.400" height="8.600" fill="#eee" stroke="#777" stroke-width="0.600"/><circle cx="516" cy="601.300" r="3.100" fill="#f4f4f4" stroke="#555" stroke-width="0.700"/><path d="M518.300 603.700l2.100 2.100" stroke="#b07030" stroke-width="1"/>
<rect x="530.300" y="598.600" width="8.700" height="5.600" fill="#8a8a8a" stroke="#666" stroke-width="0.500"/><path d="M533.300 605.400h2.700" stroke="#666" stroke-width="0.800"/>
<path d="M546.300 597.500h7.400v7.100h-7.400zM548.800 597.500v7.100M551.200 597.500v7.100M546.300 599.900h7.400M546.300 602.200h7.400" fill="none" stroke="#555" stroke-width="0.600"/>
<rect x="563" y="598.100" width="8.500" height="7.100" fill="#a8a8a8" stroke="#555" stroke-width="0.600"/><path d="M567.200 598.100v7.100M563 601.700h8.500" stroke="#555" stroke-width="0.600"/>
</svg>
<div class="abs" style="left:4px;top:610.800px;width:1020px;height:5.200px;background:#ececec;border-top:0.600px solid #d4d4d4"></div>
<div class="abs" style="left:622.200px;top:613.800px;width:20.800px;height:3px;background:#f0a5a5;border-radius:2px 2px 0 0"></div>
<div class="abs" style="left:646px;top:615.200px;width:20px;height:1px;background:#fafafa;border-radius:2px 2px 0 0"></div>
<div class="abs" style="left:589.400px;top:615px;width:3px;height:1px;background:#555"></div>
</body></html>
